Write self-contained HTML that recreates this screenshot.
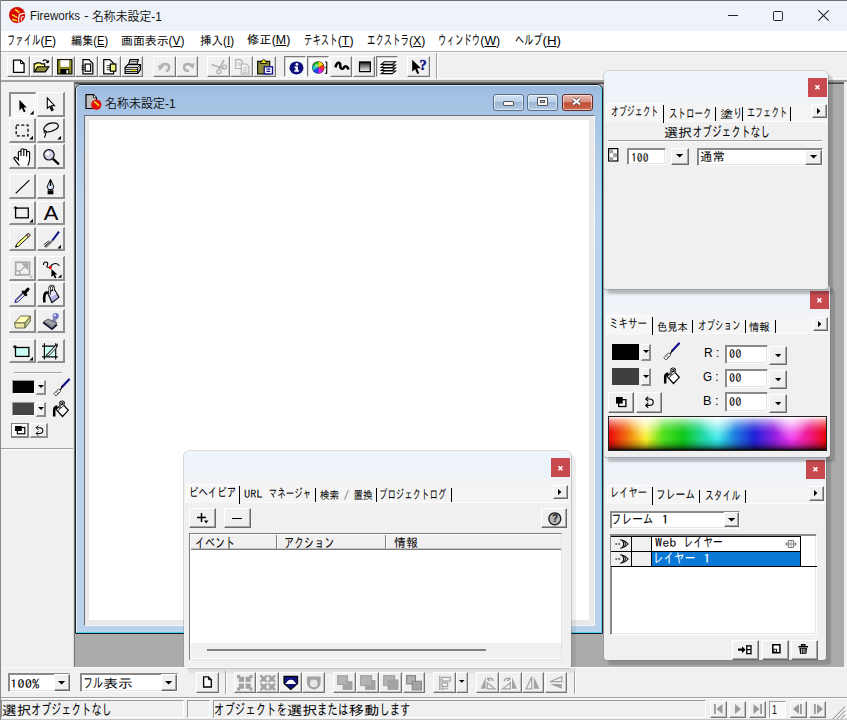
<!DOCTYPE html>
<html lang="ja">
<head>
<meta charset="utf-8">
<title>Fireworks - 名称未設定-1</title>
<style>
*{box-sizing:border-box;margin:0;padding:0}
html,body{width:847px;height:720px;overflow:hidden;background:#f0f0f0}
body{position:relative;font-family:"Liberation Sans","IPAGothic","Noto Sans CJK JP",sans-serif;font-size:12px;color:#000;line-height:1}
.a{position:absolute}
.t{position:absolute;white-space:nowrap;transform-origin:0 0;line-height:1}
.j{font-family:"Liberation Sans","IPAGothic","Noto Sans CJK JP",sans-serif}
u{text-decoration:underline;text-underline-offset:1px}
/* raised classic button */
.rb{position:absolute;background:#f0f0f0;border-top:1px solid #fff;border-left:1px solid #fff;border-right:1px solid #7a7a7a;border-bottom:1px solid #7a7a7a}
.sb{position:absolute;background:#f6f6f6;border-top:1px solid #808080;border-left:1px solid #808080;border-right:1px solid #fff;border-bottom:1px solid #fff}
.sunk{position:absolute;background:#fff;border-top:1px solid #7a7a7a;border-left:1px solid #7a7a7a;border-right:1px solid #e8e8e8;border-bottom:1px solid #e8e8e8}
svg{position:absolute;overflow:visible}
</style>
</head>
<body>
<!-- ===== main window frame ===== -->
<div class="a" id="titlebar" style="left:0;top:0;width:847px;height:31px;background:#eef3fa"></div>
<div class="a" id="menubar" style="left:0;top:31px;width:847px;height:20px;background:#fff"></div>
<div class="a" id="tbarea" style="left:0;top:51px;width:847px;height:32px;background:#f0f0f0"></div>
<div class="a" id="mdi" style="left:74px;top:82px;width:770px;height:585px;background:#ababab"></div>
<div class="a" id="toolbox" style="left:0;top:82px;width:73px;height:585px;background:#f0f0f0"></div>
<div class="a" id="bottombar" style="left:0;top:667px;width:847px;height:31px;background:#f0f0f0"></div>
<div class="a" id="statusbar" style="left:0;top:698px;width:847px;height:22px;background:#f0f0f0"></div>
<svg style="left:8.9px;top:6.8px" width="16.2" height="16.2" viewBox="0 0 16 16"><circle cx="8" cy="8" r="8" fill="#d60a00"/>
<path d="M6 2.3 L10.2 5.7 M3.1 7.5 L8 10.6 M3.2 12.2 L8 13.7" stroke="#ffe020" stroke-width="1.5" fill="none"/>
<path d="M7.4 3 L10.4 4.6 M5 9.4 L8.4 9.8" stroke="#ff9a20" stroke-width=".8" fill="none"/>
<path d="M9.6 8.2 C11.5 6.6 13.5 6.2 15.6 6.4" stroke="#f4f4f0" stroke-width="1.3" fill="none"/>
<path d="M10.4 8 C9 10.5 9.2 13 9.8 15.4" stroke="#f0f4f4" stroke-width="1.3" fill="none"/>
<path d="M14.6 9.6 C12 9 11.2 12.2 12.8 13.4" stroke="#f0f0ec" stroke-width="1.1" fill="none"/></svg><span class="t" id="t0" style="left:29.64px;top:9.85px;transform:scaleX(0.9624);font-size:12px;color:#1a1a1a;font-family:'Liberation Sans','Noto Sans CJK JP',sans-serif;">Fireworks </span><span class="t" id="t1" style="left:83.60px;top:9.75px;transform:scaleX(1.2000);font-size:12px;color:#1a1a1a;font-family:'Liberation Sans','Noto Sans CJK JP',sans-serif;">- </span><span class="t" id="t2" style="left:92.31px;top:10.75px;transform:scaleX(0.9871);font-size:12px;color:#0c0c0c;font-family:'Liberation Sans','Noto Sans CJK JP',sans-serif;font-weight:350;">名称未設定-1</span><div class="a" style="left:728px;top:15px;width:10px;height:1px;background:#222"></div><div class="a" style="left:772.5px;top:10.5px;width:10px;height:10px;border:1px solid #222;border-radius:1.5px"></div><svg style="left:818px;top:10px" width="11" height="11" viewBox="0 0 11 11"><path d="M0.3 0.3 L10.7 10.7 M10.7 0.3 L0.3 10.7" stroke="#222" stroke-width="1.1"/></svg>
<span class="t" id="t3" style="left:6.73px;top:32.80px;transform:scaleX(1.0162);font-size:12px;"><span style="display:inline-block;width:32.88px;height:12px;vertical-align:baseline"><span style="display:inline-block;font-size:14.04px;transform:scaleX(0.585);transform-origin:0 100%;white-space:nowrap">ファイル</span></span>(<u>F</u>)</span><span class="t" id="t4" style="left:70.54px;top:34.55px;transform:scaleX(0.9290);font-size:12px;">編集(<u>E</u>)</span><span class="t" id="t5" style="left:121.26px;top:34.55px;transform:scaleX(0.9920);font-size:12px;">画面表示(<u>V</u>)</span><span class="t" id="t6" style="left:199.52px;top:34.80px;transform:scaleX(0.9635);font-size:12px;">挿入(<u>I</u>)</span><span class="t" id="t7" style="left:247.48px;top:34.30px;transform:scaleX(1.0307);font-size:12px;">修正(<u>M</u>)</span><span class="t" id="t8" style="left:304.23px;top:33.30px;transform:scaleX(1.0267);font-size:12px;"><span style="display:inline-block;width:32.88px;height:12px;vertical-align:baseline"><span style="display:inline-block;font-size:14.04px;transform:scaleX(0.585);transform-origin:0 100%;white-space:nowrap">テキスト</span></span>(<u>T</u>)</span><span class="t" id="t9" style="left:367.23px;top:33.30px;transform:scaleX(1.0224);font-size:12px;"><span style="display:inline-block;width:41.10px;height:12px;vertical-align:baseline"><span style="display:inline-block;font-size:14.04px;transform:scaleX(0.585);transform-origin:0 100%;white-space:nowrap">エクストラ</span></span>(<u>X</u>)</span><span class="t" id="t10" style="left:438.45px;top:32.55px;transform:scaleX(1.0300);font-size:12px;"><span style="display:inline-block;width:41.10px;height:12px;vertical-align:baseline"><span style="display:inline-block;font-size:14.04px;transform:scaleX(0.585);transform-origin:0 100%;white-space:nowrap">ウィンドウ</span></span>(<u>W</u>)</span><span class="t" id="t11" style="left:514.94px;top:32.80px;transform:scaleX(1.1125);font-size:12px;"><span style="display:inline-block;width:24.66px;height:12px;vertical-align:baseline"><span style="display:inline-block;font-size:14.04px;transform:scaleX(0.585);transform-origin:0 100%;white-space:nowrap">ヘルプ</span></span>(<u>H</u>)</span>
<div class="a" style="left:0px;top:51px;width:847px;height:1px;background:#b4b4b4"></div><div class="a" style="left:0px;top:52px;width:847px;height:1px;background:#fbfbfb"></div><div class="a" style="left:0px;top:78.4px;width:847px;height:1px;background:#fbfbfb"></div><div class="a" style="left:0px;top:80.4px;width:847px;height:1.4px;background:#a2a2a2"></div><div class="a" style="left:7px;top:56px;width:23px;height:21px;background:#f0f0f0;border-top:1px solid #fff;border-left:1px solid #fff;border-right:1px solid #787878;border-bottom:1px solid #787878;box-shadow:inset -1px -1px 0 #cfcfcf"></div><svg style="left:9.6px;top:58px" width="17.6" height="17.6" viewBox="0 0 16 16"><path d="M3.2 1.9 H9.6 L12.8 5.1 V13 H3.2 Z" fill="#fff" stroke="#000" stroke-width="1.15"/><path d="M9.6 1.9 V5.1 H12.8" fill="none" stroke="#000" stroke-width=".9"/></svg><div class="a" style="left:30px;top:56px;width:23px;height:21px;background:#f0f0f0;border-top:1px solid #fff;border-left:1px solid #fff;border-right:1px solid #787878;border-bottom:1px solid #787878;box-shadow:inset -1px -1px 0 #cfcfcf"></div><svg style="left:32.6px;top:58px" width="17.6" height="17.6" viewBox="0 0 16 16"><path d="M1 12.6 V5.4 H2.4 L3.3 4.5 H6.6 L7.5 5.4 H10.6 V8" fill="#ffff80" stroke="#000" stroke-width="1.05"/><path d="M1 12.6 L4.2 8 H14.4 L11.2 12.6 Z" fill="#8c8c3c" stroke="#000" stroke-width="1.05"/><path d="M9 2.8 C10.4 1.2 12.8 1.4 13.6 3.8 M13.8 4.2 L11.9 3.7 M13.8 4.2 L14.3 2.2" fill="none" stroke="#000" stroke-width="1.05"/></svg><div class="a" style="left:53px;top:56px;width:22px;height:21px;background:#f0f0f0;border-top:1px solid #fff;border-left:1px solid #fff;border-right:1px solid #787878;border-bottom:1px solid #787878;box-shadow:inset -1px -1px 0 #cfcfcf"></div><svg style="left:55.6px;top:58px" width="17.6" height="17.6" viewBox="0 0 16 16"><rect x="1.5" y="1.5" width="13" height="13" fill="#8c8c1e" stroke="#000"/><rect x="4" y="2" width="8" height="6" fill="#fff"/><rect x="4" y="10" width="8" height="4.5" fill="#000"/><rect x="9.5" y="11" width="1.6" height="3" fill="#fff"/></svg><div class="a" style="left:75px;top:56px;width:23px;height:21px;background:#f0f0f0;border-top:1px solid #fff;border-left:1px solid #fff;border-right:1px solid #787878;border-bottom:1px solid #787878;box-shadow:inset -1px -1px 0 #cfcfcf"></div><svg style="left:77.6px;top:58px" width="17.6" height="17.6" viewBox="0 0 16 16"><path d="M4.5 1.5 H10 L13.5 5 V14.5 H4.5 Z" fill="#fff" stroke="#000" stroke-width="1.1"/><rect x="6.5" y="5.5" width="5" height="6.5" fill="#fff" stroke="#000" stroke-width="1.1"/><path d="M3.2 7 H6 M3.2 8.8 H6 M3.2 10.6 H6" stroke="#000" stroke-width=".7"/></svg><div class="a" style="left:98px;top:56px;width:23px;height:21px;background:#f0f0f0;border-top:1px solid #fff;border-left:1px solid #fff;border-right:1px solid #787878;border-bottom:1px solid #787878;box-shadow:inset -1px -1px 0 #cfcfcf"></div><svg style="left:100.6px;top:58px" width="17.6" height="17.6" viewBox="0 0 16 16"><path d="M2.5 1.5 H8 L11.5 5 V14.5 H2.5 Z" fill="#fff" stroke="#000" stroke-width="1.1"/><rect x="8.5" y="5.5" width="5" height="6.5" fill="#f4f480" stroke="#000" stroke-width="1.1"/><path d="M5.2 7 H8.5 M5.2 8.8 H8.5 M5.2 10.6 H8.5" stroke="#000" stroke-width=".7"/></svg><div class="a" style="left:121px;top:56px;width:22px;height:21px;background:#f0f0f0;border-top:1px solid #fff;border-left:1px solid #fff;border-right:1px solid #787878;border-bottom:1px solid #787878;box-shadow:inset -1px -1px 0 #cfcfcf"></div><svg style="left:123.6px;top:58px" width="17.6" height="17.6" viewBox="0 0 16 16"><path d="M4 6.5 L5.5 1.5 H13 L11.5 6.5" fill="#fff" stroke="#000" stroke-width="1.1"/><path d="M5.8 3.2 H11.8 M5.3 4.8 H11.3" stroke="#000" stroke-width=".6"/><path d="M1 8.5 L3.5 6 H15 V10.5 L12.5 14 H1 Z" fill="#fff" stroke="#000" stroke-width="1.1"/><path d="M1 8.5 H12.5 V14 M12.5 8.5 L15 6 M1.2 10.3 H12.3 M1.2 12.2 H12.3" fill="none" stroke="#000" stroke-width=".9"/><rect x="6.5" y="10.6" width="4.6" height="1.3" fill="#e8d800"/><path d="M13.3 9.6 L14.6 8.2 M13.3 11.6 L14.6 10.2" stroke="#000" stroke-width=".6"/></svg><div class="a" style="left:153px;top:56px;width:23px;height:21px;background:#f0f0f0;border-top:1px solid #fff;border-left:1px solid #fff;border-right:1px solid #787878;border-bottom:1px solid #787878;box-shadow:inset -1px -1px 0 #cfcfcf"></div><svg style="left:155.6px;top:58px" width="17.6" height="17.6" viewBox="0 0 16 16"><path d="M4.5 8.5 C5 4.5 12 4.5 12 8.5 C12 10.5 10.8 11.6 9 12" fill="none" stroke="#b2b2b2" stroke-width="2.3"/><path d="M1.6 6.6 L7.4 7.4 L3.2 11.6 Z" fill="#b2b2b2"/></svg><div class="a" style="left:176px;top:56px;width:22px;height:21px;background:#f0f0f0;border-top:1px solid #fff;border-left:1px solid #fff;border-right:1px solid #787878;border-bottom:1px solid #787878;box-shadow:inset -1px -1px 0 #cfcfcf"></div><svg style="left:178.6px;top:58px" width="17.6" height="17.6" viewBox="0 0 16 16"><path d="M11.5 7.5 C11 4.5 4.5 4.8 4.5 8.5 C4.5 10.8 6.5 12 9 11.6" fill="none" stroke="#b2b2b2" stroke-width="2.3"/><path d="M14.4 4.6 L8.6 6.2 L12.8 10 Z" fill="#b2b2b2"/></svg><div class="a" style="left:207px;top:56px;width:23px;height:21px;background:#f0f0f0;border-top:1px solid #fff;border-left:1px solid #fff;border-right:1px solid #787878;border-bottom:1px solid #787878;box-shadow:inset -1px -1px 0 #cfcfcf"></div><svg style="left:209.6px;top:58px" width="17.6" height="17.6" viewBox="0 0 16 16"><path d="M1.5 6 L12 9.8 M12.8 1.8 L7.6 11" stroke="#b0b0b0" stroke-width="1.4" fill="none"/><circle cx="8" cy="12.6" r="1.8" fill="none" stroke="#b0b0b0" stroke-width="1.2"/><circle cx="13.2" cy="8.2" r="1.8" fill="none" stroke="#b0b0b0" stroke-width="1.2"/></svg><div class="a" style="left:230px;top:56px;width:23px;height:21px;background:#f0f0f0;border-top:1px solid #fff;border-left:1px solid #fff;border-right:1px solid #787878;border-bottom:1px solid #787878;box-shadow:inset -1px -1px 0 #cfcfcf"></div><svg style="left:232.6px;top:58px" width="17.6" height="17.6" viewBox="0 0 16 16"><path d="M2.5 1.5 H6.5 L8.5 3.5 V9.5 H2.5 Z" fill="#f6f6f6" stroke="#b0b0b0"/><path d="M7.5 5.5 H12 L14.5 8 V14.5 H7.5 Z" fill="#f6f6f6" stroke="#b0b0b0"/><path d="M4 4.5 H7 M4 6.5 H7 M9 9 H13 M9 11 H13 M9 13 H13" stroke="#b0b0b0" stroke-width=".8"/></svg><div class="a" style="left:253px;top:56px;width:23px;height:21px;background:#f0f0f0;border-top:1px solid #fff;border-left:1px solid #fff;border-right:1px solid #787878;border-bottom:1px solid #787878;box-shadow:inset -1px -1px 0 #cfcfcf"></div><svg style="left:255.6px;top:58px" width="17.6" height="17.6" viewBox="0 0 16 16"><rect x="1.5" y="3" width="11" height="11.5" fill="#8c8c3c" stroke="#000"/><path d="M4 5 V3.2 H5.5 C5.5 0.8 8.5 0.8 8.5 3.2 H10 V5 Z" fill="#f0e000" stroke="#000" stroke-width=".8"/><rect x="7.5" y="8" width="7.5" height="6.5" fill="#fff" stroke="#10108c" stroke-width="1.2"/><path d="M9.5 10.2 H13 M9.5 12.2 H13" stroke="#10108c" stroke-width="1.1"/></svg><div class="a" style="left:284px;top:56px;width:22px;height:21px;background:#f9f9f9;border-top:1px solid #7c7c7c;border-left:1px solid #7c7c7c;border-right:1px solid #fff;border-bottom:1px solid #fff;box-shadow:inset 1px 1px 0 #d4d4d4"></div><svg style="left:286.6px;top:58px" width="17.6" height="17.6" viewBox="0 0 16 16"><ellipse cx="8.6" cy="9" rx="6.4" ry="5.9" fill="#10107c"/><circle cx="9" cy="5.9" r="1.25" fill="#fff"/><path d="M6.8 7.8 H9.9 V11.2 H10.9 V12.4 H6.6 V11.2 H7.7 V9 H6.8 Z" fill="#fff"/></svg><div class="a" style="left:307px;top:56px;width:22px;height:21px;background:#f9f9f9;border-top:1px solid #7c7c7c;border-left:1px solid #7c7c7c;border-right:1px solid #fff;border-bottom:1px solid #fff;box-shadow:inset 1px 1px 0 #d4d4d4"></div><svg style="left:309.6px;top:58px" width="17.6" height="17.6" viewBox="0 0 16 16"><g transform="translate(1.2 1) scale(.9)"><circle cx="7" cy="8.5" r="6.3" fill="#222"/><path d="M7 8.5 L7 2.8 A5.7 5.7 0 0 1 12 5.6 Z" fill="#ffe000"/><path d="M7 8.5 L12 5.6 A5.7 5.7 0 0 1 12 11.4 Z" fill="#ff3020"/><path d="M7 8.5 L12 11.4 A5.7 5.7 0 0 1 7 14.2 Z" fill="#e020e0"/><path d="M7 8.5 L7 14.2 A5.7 5.7 0 0 1 2 11.4 Z" fill="#2040ff"/><path d="M7 8.5 L2 11.4 A5.7 5.7 0 0 1 2 5.6 Z" fill="#20c8c8"/><path d="M7 8.5 L2 5.6 A5.7 5.7 0 0 1 7 2.8 Z" fill="#20c020"/><circle cx="5.5" cy="6.5" r="1.6" fill="#fff" opacity=".55"/><path d="M15.6 3 V14.4 M14 3 H15.6 M14 14.4 H15.6 M14.2 8.7 H15.6" stroke="#000" stroke-width="1.1" fill="none"/></g></svg><div class="a" style="left:330px;top:56px;width:22px;height:21px;background:#f0f0f0;border-top:1px solid #fff;border-left:1px solid #fff;border-right:1px solid #787878;border-bottom:1px solid #787878;box-shadow:inset -1px -1px 0 #cfcfcf"></div><svg style="left:332.6px;top:58px" width="17.6" height="17.6" viewBox="0 0 16 16"><path d="M2.2 8.5 C3.5 3.2 6.8 3.4 6.6 6.6 C6.4 10 9 10.6 10 8.6 C11 6.8 13 7.4 14.2 10.4" fill="none" stroke="#000" stroke-width="2.3"/></svg><div class="a" style="left:353px;top:56px;width:22px;height:21px;background:#f0f0f0;border-top:1px solid #fff;border-left:1px solid #fff;border-right:1px solid #787878;border-bottom:1px solid #787878;box-shadow:inset -1px -1px 0 #cfcfcf"></div><svg style="left:355.6px;top:58px" width="17.6" height="17.6" viewBox="0 0 16 16"><defs><linearGradient id="gfill" x1="0" y1="0" x2="0" y2="1"><stop offset="0" stop-color="#000"/><stop offset=".25" stop-color="#555"/><stop offset="1" stop-color="#fff"/></linearGradient></defs><rect x="3.2" y="3.6" width="9.8" height="8.8" fill="url(#gfill)" stroke="#000" stroke-width="1.1"/></svg><div class="a" style="left:376px;top:56px;width:22px;height:21px;background:#f9f9f9;border-top:1px solid #7c7c7c;border-left:1px solid #7c7c7c;border-right:1px solid #fff;border-bottom:1px solid #fff;box-shadow:inset 1px 1px 0 #d4d4d4"></div><svg style="left:378.6px;top:58px" width="17.6" height="17.6" viewBox="0 0 16 16"><path d="M5 3.5 H15 L12 5.8 H2 Z M5 6.3 H15 L12 8.6 H2 Z M5 9.1 H15 L12 11.4 H2 Z M5 11.9 H15 L12 14.2 H2 Z" fill="#fdfdfd" stroke="#000" stroke-width=".95"/></svg><div class="a" style="left:407px;top:56px;width:23px;height:21px;background:#f0f0f0;border-top:1px solid #fff;border-left:1px solid #fff;border-right:1px solid #787878;border-bottom:1px solid #787878;box-shadow:inset -1px -1px 0 #cfcfcf"></div><svg style="left:409.6px;top:58px" width="17.6" height="17.6" viewBox="0 0 16 16"><path d="M2 1.5 V12.5 L4.6 10 L6.6 14.6 L8.4 13.8 L6.4 9.4 H10 Z" fill="#000"/><text x="8.6" y="10.6" font-family="Liberation Serif,serif" font-weight="bold" font-size="13" fill="#10108c" stroke="#10108c" stroke-width=".4">?</text></svg><div class="a" style="left:436px;top:53px;width:1px;height:26px;background:#a0a0a0"></div><div class="a" style="left:437px;top:53px;width:1px;height:26px;background:#fff"></div>
<div class="a" style="left:73px;top:82px;width:1px;height:585px;background:#dcdcdc"></div><div class="a" style="left:9.4px;top:92.3px;width:26.7px;height:24.8px;background:#f6f6f6;border-top:2px solid #8c8c8c;border-left:2px solid #8c8c8c;border-right:1px solid #fff;border-bottom:1px solid #fff"></div><svg style="left:10.4px;top:94.3px" width="24" height="24" viewBox="0 0 24 24"><path d="M9.4 5.7 V16.4 L11.9 14.1 L13.8 18.3 L15.6 17.5 L13.7 13.4 H16.8 Z" fill="#000"/><path d="M23.7 16.6 V20.4 H19.9 Z" fill="#000"/></svg><div class="a" style="left:37px;top:92.3px;width:27.5px;height:24.8px;background:#f0f0f0;border-top:1px solid #fff;border-left:1px solid #fff;border-right:2px solid #8e8e8e;border-bottom:2px solid #8e8e8e"></div><svg style="left:38px;top:94.3px" width="24" height="24" viewBox="0 0 24 24"><path d="M9.3 3.9 V14.4 L11.7 12.3 L13.6 16.7 L15.2 16 L13.3 11.7 H16.5 Z" fill="#fff" stroke="#000" stroke-width="1.1"/><path d="M12 12.6 L13.8 16.6 L15 16 L13.2 12 Z" fill="#000"/></svg><div class="a" style="left:9.4px;top:118.4px;width:26.7px;height:24.8px;background:#f0f0f0;border-top:1px solid #fff;border-left:1px solid #fff;border-right:2px solid #8e8e8e;border-bottom:2px solid #8e8e8e"></div><svg style="left:10.4px;top:120.4px" width="24" height="24" viewBox="0 0 24 24"><rect x="6.2" y="5.2" width="11.8" height="10.6" fill="none" stroke="#000" stroke-width="1.3" stroke-dasharray="3 2.1"/><path d="M23 15.7 V19.4 H19.3 Z" fill="#000"/></svg><div class="a" style="left:37px;top:118.4px;width:27.5px;height:24.8px;background:#f0f0f0;border-top:1px solid #fff;border-left:1px solid #fff;border-right:2px solid #8e8e8e;border-bottom:2px solid #8e8e8e"></div><svg style="left:38px;top:120.4px" width="24" height="24" viewBox="0 0 24 24"><path d="M7 11.6 C3.5 8 9 2.6 15.5 2.9 C21 3.2 22 7 17.5 9.4 C13.5 11.4 9 12.6 7 11.6 Z" fill="none" stroke="#000" stroke-width="1.15"/><circle cx="7.3" cy="12" r="1.3" fill="none" stroke="#000" stroke-width=".9"/><path d="M7.6 13 C8.2 14.6 7 16 6.4 17.6" fill="none" stroke="#000" stroke-width="1.1"/><path d="M23 15.7 V19.4 H19.3 Z" fill="#000"/></svg><div class="a" style="left:9.4px;top:144.2px;width:26.7px;height:24.8px;background:#f0f0f0;border-top:1px solid #fff;border-left:1px solid #fff;border-right:2px solid #8e8e8e;border-bottom:2px solid #8e8e8e"></div><svg style="left:10.4px;top:146.2px" width="24" height="24" viewBox="0 0 24 24"><path d="M9.4 19.6 L4.4 13.2 C3.2 11.4 5 10.4 6.4 11.8 L8.4 13.8 V6.5 C8.4 4.8 11 4.8 11 6.5 V10 V4 C11 2.3 13.8 2.3 13.8 4 V10 V4.4 C13.8 2.8 16.6 2.8 16.6 4.4 V10.5 V6.6 C16.6 5 19.6 5 19.6 6.6 V13 C19.6 16 18.4 17.6 17.8 19.6" fill="#fff" stroke="#000" stroke-width="1.15"/></svg><div class="a" style="left:37px;top:144.2px;width:27.5px;height:24.8px;background:#f0f0f0;border-top:1px solid #fff;border-left:1px solid #fff;border-right:2px solid #8e8e8e;border-bottom:2px solid #8e8e8e"></div><svg style="left:38px;top:146.2px" width="24" height="24" viewBox="0 0 24 24"><circle cx="11" cy="8.8" r="5.1" fill="#d4d4de" stroke="#000" stroke-width="1.4"/><circle cx="11" cy="8.8" r="4.2" fill="none" stroke="#b8b8f0" stroke-width=".8"/><circle cx="9.6" cy="7.2" r="1.9" fill="#fff"/><path d="M15 12.8 L21 18.4" stroke="#000" stroke-width="2.3"/></svg><div class="a" style="left:9.4px;top:174.3px;width:26.7px;height:24.8px;background:#f0f0f0;border-top:1px solid #fff;border-left:1px solid #fff;border-right:2px solid #8e8e8e;border-bottom:2px solid #8e8e8e"></div><svg style="left:10.4px;top:176.3px" width="24" height="24" viewBox="0 0 24 24"><path d="M5.7 17.4 L19.4 4.1" stroke="#000" stroke-width="1.15"/></svg><div class="a" style="left:37px;top:174.3px;width:27.5px;height:24.8px;background:#f0f0f0;border-top:1px solid #fff;border-left:1px solid #fff;border-right:2px solid #8e8e8e;border-bottom:2px solid #8e8e8e"></div><svg style="left:38px;top:176.3px" width="24" height="24" viewBox="0 0 24 24"><path d="M12.5 3.3 L9.2 10.6 L10.4 13.6 H14.6 L15.8 10.6 Z" fill="#c8d8f4" stroke="#000" stroke-width="1"/><path d="M12.5 3.5 V10.5" stroke="#000" stroke-width="1.2"/><circle cx="12.5" cy="11" r=".9" fill="#fff"/><rect x="9.6" y="14.3" width="5.8" height="4" fill="#000"/></svg><div class="a" style="left:9.4px;top:200.6px;width:26.7px;height:24.8px;background:#f0f0f0;border-top:1px solid #fff;border-left:1px solid #fff;border-right:2px solid #8e8e8e;border-bottom:2px solid #8e8e8e"></div><svg style="left:10.4px;top:202.6px" width="24" height="24" viewBox="0 0 24 24"><rect x="5.6" y="5.1" width="12.7" height="9.7" fill="none" stroke="#000" stroke-width="1.3"/><path d="M5.6 3.2 V6.6 M3.8 4.9 H7.2" stroke="#000" stroke-width="1.1"/><path d="M23 15.7 V19.4 H19.3 Z" fill="#000"/></svg><div class="a" style="left:37px;top:200.6px;width:27.5px;height:24.8px;background:#f0f0f0;border-top:1px solid #fff;border-left:1px solid #fff;border-right:2px solid #8e8e8e;border-bottom:2px solid #8e8e8e"></div><svg style="left:38px;top:202.6px" width="24" height="24" viewBox="0 0 24 24"><text x="5.75" y="16.9" font-family="Liberation Sans,sans-serif" font-size="19.6" textLength="14.6" lengthAdjust="spacingAndGlyphs" fill="#000">A</text></svg><div class="a" style="left:9.4px;top:226.5px;width:26.7px;height:24.8px;background:#f0f0f0;border-top:1px solid #fff;border-left:1px solid #fff;border-right:2px solid #8e8e8e;border-bottom:2px solid #8e8e8e"></div><svg style="left:10.4px;top:228.5px" width="24" height="24" viewBox="0 0 24 24"><path d="M5.5 18.2 L6.6 15 L17.8 4.8 C18.6 4 20.6 5.8 19.6 6.8 L8.6 17.2 Z" fill="#ffffa0" stroke="#000" stroke-width=".9"/><path d="M16.6 6 L18.4 7.9" stroke="#000" stroke-width=".8"/><path d="M17.8 4.8 C18.6 4 20.6 5.8 19.6 6.8 L18.4 7.9 L16.6 6 Z" fill="#f8c0c0" stroke="#000" stroke-width=".7"/><path d="M5.5 18.2 L6.2 16.2 L7.5 17.5 Z" fill="#000"/><path d="M7.4 15.6 L17 6.9" stroke="#e0e040" stroke-width=".7"/></svg><div class="a" style="left:37px;top:226.5px;width:27.5px;height:24.8px;background:#f0f0f0;border-top:1px solid #fff;border-left:1px solid #fff;border-right:2px solid #8e8e8e;border-bottom:2px solid #8e8e8e"></div><svg style="left:38px;top:228.5px" width="24" height="24" viewBox="0 0 24 24"><path d="M21 2.6 L14 12" stroke="#10108c" stroke-width="2"/><path d="M14.4 11.4 L11.6 14.2" stroke="#909090" stroke-width="2.6"/><path d="M11.8 12.6 L6.4 17.4 M12.8 13.8 L8 18.6 M10.8 11.8 L5.6 15.8 M12.2 13.2 L7 18" stroke="#404040" stroke-width="1"/><path d="M23 15.7 V19.4 H19.3 Z" fill="#000"/></svg><div class="a" style="left:9.4px;top:255.8px;width:26.7px;height:24.8px;background:#f0f0f0;border-top:1px solid #fff;border-left:1px solid #fff;border-right:2px solid #8e8e8e;border-bottom:2px solid #8e8e8e"></div><svg style="left:10.4px;top:257.8px" width="24" height="24" viewBox="0 0 24 24"><rect x="5.7" y="4.3" width="13.8" height="12.5" fill="none" stroke="#aaa" stroke-width="1.8"/><rect x="5.6" y="12.9" width="4.2" height="4" fill="#f8f8f8" stroke="#aaa" stroke-width="1.5"/><path d="M10.6 12.6 L16 7.2 M12.6 6 H17.4 V10.8 Z" fill="#aaa" stroke="#aaa" stroke-width="1.3"/><path d="M22.4 16.8 V19.7 H19.5 Z" fill="#aaa"/></svg><div class="a" style="left:37px;top:255.8px;width:27.5px;height:24.8px;background:#f0f0f0;border-top:1px solid #fff;border-left:1px solid #fff;border-right:2px solid #8e8e8e;border-bottom:2px solid #8e8e8e"></div><svg style="left:38px;top:257.8px" width="24" height="24" viewBox="0 0 24 24"><path d="M5.4 7 C5.4 2.8 10.6 3.2 9.6 6.6 C8.8 9 7.6 9.4 12.2 9.5 C13 6.2 18.6 3.4 21.4 7.8" fill="none" stroke="#000" stroke-width="1.15"/><rect x="11" y="8.2" width="2.7" height="2.7" fill="#f00000"/><path d="M13.4 11 V19 L15.4 17.2 L17 20.4 L18.4 19.7 L16.9 16.6 H19.4 Z" fill="#000"/><path d="M23.5 16.2 V19.8 H19.9 Z" fill="#000"/></svg><div class="a" style="left:9.4px;top:282.1px;width:26.7px;height:24.8px;background:#f0f0f0;border-top:1px solid #fff;border-left:1px solid #fff;border-right:2px solid #8e8e8e;border-bottom:2px solid #8e8e8e"></div><svg style="left:10.4px;top:284.1px" width="24" height="24" viewBox="0 0 24 24"><path d="M4.9 18.4 L5.8 15.6 L13.6 7.8 L15.8 10 L8 17.8 Z" fill="#f8f8ff" stroke="#10108c" stroke-width="1"/><path d="M6.4 16.2 L13.8 8.8" stroke="#000" stroke-width=".9"/><path d="M12.2 7 L16.8 11.6" stroke="#000" stroke-width="2.4"/><path d="M14.6 9 L18 5.2" stroke="#000" stroke-width="3.2" stroke-linecap="round"/></svg><div class="a" style="left:37px;top:282.1px;width:27.5px;height:24.8px;background:#f0f0f0;border-top:1px solid #fff;border-left:1px solid #fff;border-right:2px solid #8e8e8e;border-bottom:2px solid #8e8e8e"></div><svg style="left:38px;top:284.1px" width="24" height="24" viewBox="0 0 24 24"><path d="M9.4 8.6 L16.2 5.2 L21 13.2 L14 18.6 Z" fill="#b8b8e8" stroke="#000" stroke-width="1.1"/><path d="M11 9.4 L16.4 6.6 L18.4 10 L12.6 13 Z" fill="#e8e8fc"/><path d="M9.6 8.4 C6.4 8.6 5.6 12 6.4 18.4" fill="none" stroke="#000" stroke-width="2.6"/><path d="M11.6 10 V3.6 C11.6 1.4 15.6 1.4 15.6 3.6 V7" fill="none" stroke="#000" stroke-width="2.2"/><path d="M11.6 10 V3.6 C11.6 1.4 15.6 1.4 15.6 3.6 V7" fill="none" stroke="#fff" stroke-width=".9"/><circle cx="11.6" cy="10.4" r="1" fill="#fff" stroke="#000" stroke-width=".5"/></svg><div class="a" style="left:9.4px;top:308.5px;width:26.7px;height:24.8px;background:#f0f0f0;border-top:1px solid #fff;border-left:1px solid #fff;border-right:2px solid #8e8e8e;border-bottom:2px solid #8e8e8e"></div><svg style="left:10.4px;top:310.5px" width="24" height="24" viewBox="0 0 24 24"><path d="M4.6 12 L10.6 5 H20.4 L15 12 Z" fill="#ffffb8" stroke="#606040" stroke-width=".9"/><path d="M4.6 12 H15 V17 H5.4 Z" fill="#ece6a8" stroke="#606040" stroke-width=".9"/><path d="M15 12 L20.4 5 V10 L15 17 Z" fill="#b8c890" stroke="#606040" stroke-width=".9"/></svg><div class="a" style="left:37px;top:308.5px;width:27.5px;height:24.8px;background:#f0f0f0;border-top:1px solid #fff;border-left:1px solid #fff;border-right:2px solid #8e8e8e;border-bottom:2px solid #8e8e8e"></div><svg style="left:38px;top:310.5px" width="24" height="24" viewBox="0 0 24 24"><circle cx="17.7" cy="5.1" r="3.1" fill="#7070c0"/><circle cx="16.8" cy="4.2" r="1.2" fill="#d8d8ff"/><path d="M15.2 7 L12.4 11.4 L17.4 13 L18.6 8 Z" fill="#8890b0"/><path d="M5.6 10.6 L10 8 L19.2 12 L14.4 16 Z" fill="#a0a0a8" stroke="#383850" stroke-width=".7"/><path d="M5.2 11.6 L14 18 L19 13.6" fill="none" stroke="#181830" stroke-width="1.8"/></svg><div class="a" style="left:9.4px;top:338.5px;width:26.7px;height:24.8px;background:#f0f0f0;border-top:1px solid #fff;border-left:1px solid #fff;border-right:2px solid #8e8e8e;border-bottom:2px solid #8e8e8e"></div><svg style="left:10.4px;top:340.5px" width="24" height="24" viewBox="0 0 24 24"><rect x="5.5" y="6.5" width="13.4" height="8.9" fill="#ccfff6" stroke="#000" stroke-width="1.3"/><path d="M4.9 4 V7.6 M3 5.9 H6.8" stroke="#000" stroke-width="1.1"/><path d="M23 15.7 V19.4 H19.3 Z" fill="#000"/></svg><div class="a" style="left:37px;top:338.5px;width:27.5px;height:24.8px;background:#f0f0f0;border-top:1px solid #fff;border-left:1px solid #fff;border-right:2px solid #8e8e8e;border-bottom:2px solid #8e8e8e"></div><svg style="left:38px;top:340.5px" width="24" height="24" viewBox="0 0 24 24"><rect x="6.4" y="5.1" width="11.3" height="10.8" fill="#ccfff6"/><path d="M4 5.1 H19.8 M4 15.9 H19.8 M6.4 2.2 V18.5 M17.7 2.2 V18.5" stroke="#000" stroke-width="1.15"/><path d="M7.4 15.4 L18.2 4" stroke="#000" stroke-width="1"/><path d="M19.4 2.8 L17.8 7.6 L10.4 15 L9.2 13.6 Z" fill="#fff" stroke="#000" stroke-width=".9"/></svg><div class="a" style="left:14.2px;top:372px;width:48px;height:1px;background:#a4a4a4"></div><div class="a" style="left:14.2px;top:373px;width:48px;height:1px;background:#fbfbfb"></div><div class="a" style="left:12.1px;top:380.1px;width:22.6px;height:14.4px;background:#000;border-top:1px solid #9a9a9a;border-left:1px solid #9a9a9a;border-right:1px solid #fff;border-bottom:1px solid #fff"></div><div class="a" style="left:36px;top:380.1px;width:10px;height:14.6px;background:#f0f0f0;border-top:1px solid #fff;border-left:1px solid #fff;border-right:2px solid #8e8e8e;border-bottom:2px solid #8e8e8e"></div><svg style="left:37.6px;top:384.9px" width="6" height="3" viewBox="0 0 6 3"><path d="M0 0 H6 L3 3 Z" fill="#000"/></svg><svg style="left:52.8px;top:378.8px" width="18" height="17" viewBox="0 0 18 17"><path d="M16 0.5 L9.2 7.7" stroke="#10108c" stroke-width="2.2" stroke-linecap="round"/><path d="M9.4 7.4 L7.2 11" stroke="#000" stroke-width="1.2"/><path d="M5.6 9.8 L7.8 12.2 L3 17 L0.9 14.7 Z" fill="#f4f4f4" stroke="#404040" stroke-width=".9"/><path d="M4.6 12 L2.6 14 M6 13 L4 15" stroke="#505050" stroke-width=".7"/></svg><div class="a" style="left:12.1px;top:402.4px;width:22.6px;height:14px;background:#454545;border-top:1px solid #9a9a9a;border-left:1px solid #9a9a9a;border-right:1px solid #fff;border-bottom:1px solid #fff"></div><div class="a" style="left:36px;top:402.4px;width:10px;height:14.4px;background:#f0f0f0;border-top:1px solid #fff;border-left:1px solid #fff;border-right:2px solid #8e8e8e;border-bottom:2px solid #8e8e8e"></div><svg style="left:37.6px;top:407.1px" width="6" height="3" viewBox="0 0 6 3"><path d="M0 0 H6 L3 3 Z" fill="#000"/></svg><svg style="left:52px;top:401px" width="17" height="17" viewBox="0 0 17 17"><path d="M4 8.3 L10.5 2.8 L16.3 9.3 L10.5 15.5 Z" fill="#fff" stroke="#000" stroke-width="1.2"/><path d="M5.8 9.8 L11.8 4.6" stroke="#000" stroke-width=".8"/><path d="M5.4 5.4 C3 5.6 2.2 7 2.2 9 V15.6" fill="none" stroke="#000" stroke-width="2.5"/><path d="M8 8 V2.6 C8 0 12 0 12 2.6 V4.6" fill="none" stroke="#000" stroke-width="2.1"/><path d="M8 8 V2.6 C8 0 12 0 12 2.6 V4.6" fill="none" stroke="#fff" stroke-width=".8"/></svg><div class="a" style="left:10.9px;top:423.1px;width:18px;height:14.8px;background:#fafafa;border:1px solid #7e7e7e;border-right:2px solid #868686;border-bottom:2px solid #868686;box-shadow:inset 1px 1px 0 #fff"></div><svg style="left:15.2px;top:426.3px" width="10.4" height="8.4" viewBox="0 0 10.4 8.4"><rect x="2.4" y="1.5" width="7.4" height="6.3" fill="#fff" stroke="#000" stroke-width="1.2"/><rect x="0" y="0" width="6.8" height="5" fill="#000"/></svg><div class="a" style="left:30.3px;top:423.1px;width:17.9px;height:14.8px;background:#f0f0f0;border-top:1px solid #fff;border-left:1px solid #fff;border-right:2px solid #8e8e8e;border-bottom:2px solid #8e8e8e"></div><svg style="left:34.6px;top:424.8px" width="9" height="11.2" viewBox="0 0 9 12.4"><path d="M0.8 3 H4.6 C9.4 3 9.4 9.4 4.6 9.4 H0.8" fill="none" stroke="#000" stroke-width="1.15"/><path d="M3.2 0.6 L0.8 3 L3.2 5.4" fill="none" stroke="#000" stroke-width="1.1"/><path d="M3.2 7 L0.8 9.4 L3.2 11.8" fill="none" stroke="#000" stroke-width="1.1"/></svg><div class="a" style="left:0px;top:448px;width:73px;height:1px;background:#a0a0a0"></div><div class="a" style="left:0px;top:449px;width:73px;height:1px;background:#fff"></div>
<div class="a" style="left:74px;top:82px;width:770px;height:2px;background:linear-gradient(#6a6a6a 0,#6a6a6a 50%,#4a4a4a 50%)"></div><div class="a" style="left:74px;top:82px;width:1px;height:585px;background:#767676"></div><div class="a" style="left:75px;top:83.6px;width:528px;height:550.4px;background:linear-gradient(#98b7dc 0,#a4c1e3 10px,#a9c5e5 34px,#b4cdea 80px,#bdd4ed 130px,#b9d1ea 220px,#b9d1ea 100%);border:1px solid #161c24;border-radius:6px 6px 1px 1px"></div><div class="a" style="left:76px;top:84.6px;width:526px;height:548.4px;border:1px solid rgba(255,255,255,.7);border-bottom:1px solid #49d0ee;border-right:1px solid #5fd2f0;border-radius:5px 5px 0 0"></div><svg style="left:85px;top:94px" width="17" height="17" viewBox="0 0 17 17"><path d="M1 0.7 H8.5 L11.5 3.7 V14.5 H1 Z" fill="#c0c0c0" stroke="#000" stroke-width="1.2"/><path d="M8.5 0.7 V3.7 H11.5" fill="#fff" stroke="#000" stroke-width=".8"/><circle cx="11.3" cy="10.6" r="5.2" fill="#e01010"/><path d="M8.5 8 L13.5 12.5 L14.5 11 L10 7 Z" fill="#ffd820"/><path d="M9.2 8.4 L13.4 12" stroke="#e07000" stroke-width=".7"/></svg><span class="t" id="t12" style="left:105.00px;top:97.55px;transform:scaleX(1.0000);font-size:12px;color:#0c0c0c;font-family:'Liberation Sans','Noto Sans CJK JP',sans-serif;font-weight:350;">名称未設定-1</span><div class="a" style="left:493px;top:93.6px;width:31.4px;height:17px;background:linear-gradient(#d5e3f3 0,#bcd0e8 45%,#9bb7d8 50%,#b4cbe4 100%);border:1px solid #5b6e88;border-radius:3px;box-shadow:inset 0 0 0 1px rgba(255,255,255,.55)"></div><div class="a" style="left:527px;top:93.6px;width:31.4px;height:17px;background:linear-gradient(#d5e3f3 0,#bcd0e8 45%,#9bb7d8 50%,#b4cbe4 100%);border:1px solid #5b6e88;border-radius:3px;box-shadow:inset 0 0 0 1px rgba(255,255,255,.55)"></div><div class="a" style="left:561.5px;top:93.6px;width:31.6px;height:17px;background:linear-gradient(#e6b9ae 0,#d68f80 45%,#c04a32 52%,#cb6a52 100%);border:1px solid #6a2a22;border-radius:3px;box-shadow:inset 0 0 0 1px rgba(255,255,255,.55)"></div><div class="a" style="left:503px;top:101.4px;width:11.4px;height:4.6px;background:#f6f6f6;border:1px solid #555;border-radius:1px"></div><div class="a" style="left:537.3px;top:97.2px;width:10.6px;height:8.4px;background:#f6f6f6;border:1px solid #555;border-radius:1px"></div><div class="a" style="left:540.3px;top:100.2px;width:4.6px;height:2.8px;background:#a9c0dc;border:1px solid #555"></div><svg style="left:571.4px;top:96.8px" width="11" height="9" viewBox="0 0 11 9"><path d="M2 1.6 L9 7.4 M9 1.6 L2 7.4" stroke="#5a3a3a" stroke-width="3.8"/><path d="M2 1.6 L9 7.4 M9 1.6 L2 7.4" stroke="#f8f8f8" stroke-width="2.1"/></svg><div class="a" style="left:83.6px;top:114.6px;width:511px;height:511px;background:#e9e9e9;border:1px solid #6c7076;border-right-color:#f4f7fa;border-bottom-color:#f4f7fa"></div><div class="a" style="left:88.6px;top:119.6px;width:500.6px;height:500.6px;background:#fff"></div>
<div class="a" style="left:604.2px;top:452px;width:221.8px;height:208.4px;background:#f0f0f0;border-radius:5px 5px 3px 3px;box-shadow:4.5px 4.5px 1.6px 0 rgba(0,0,0,0.16), 0 0 0 .6px rgba(120,120,120,.5)"></div><div class="a" style="left:604.2px;top:452px;width:221.8px;height:35.19999999999999px;background:linear-gradient(#f0f5fa 0,#edf3f9 55%,#f0f3f7 85%,#f4f4f5 100%);border-radius:5px 5px 0 0"></div><div class="a" style="left:806.4px;top:460px;width:18.6px;height:18.6px;background:#c84a4f"></div><svg style="left:813.3px;top:467.1px" width="4.8" height="4.6" viewBox="0 0 4.8 4.6"><path d="M0.4 0.3 L4.4 4.3 M4.4 0.3 L0.4 4.3" stroke="#fff" stroke-width="1.55"/></svg><div class="a" style="left:605.2px;top:485.2px;width:219.8px;height:18.6px;background:#f4f4f4;border-bottom:1px solid #fcfcfc"></div><div class="a" style="left:606.6px;top:484.8px;width:45.0px;height:19.6px;background:#f6f6f6;border-top:1px solid #fdfdfd;border-left:1px solid #fdfdfd;border-radius:3px 0 0 0"></div><span class="t" id="t30" style="left:610.16px;top:486.75px;transform:scaleX(1.2252);font-size:11px;font-family:'IPAGothic','Liberation Sans',sans-serif;"><span style="display:inline-block;width:30.14px;height:11px;vertical-align:baseline"><span style="display:inline-block;font-size:12.87px;transform:scaleX(0.585);transform-origin:0 100%;white-space:nowrap">レイヤー</span></span></span><span class="t" id="t31" style="left:655.98px;top:489.20px;transform:scaleX(1.2964);font-size:11px;font-family:'IPAGothic','Liberation Sans',sans-serif;"><span style="display:inline-block;width:30.14px;height:11px;vertical-align:baseline"><span style="display:inline-block;font-size:12.87px;transform:scaleX(0.585);transform-origin:0 100%;white-space:nowrap">フレーム</span></span></span><span class="t" id="t32" style="left:704.92px;top:489.95px;transform:scaleX(1.1687);font-size:11px;font-family:'IPAGothic','Liberation Sans',sans-serif;"><span style="display:inline-block;width:30.14px;height:11px;vertical-align:baseline"><span style="display:inline-block;font-size:12.87px;transform:scaleX(0.585);transform-origin:0 100%;white-space:nowrap">スタイル</span></span></span><div class="a" style="left:652px;top:486.8px;width:1.1px;height:18px;background:#000"></div><div class="a" style="left:699.2px;top:489.59999999999997px;width:1.1px;height:13.2px;background:#000"></div><div class="a" style="left:744.5px;top:489.59999999999997px;width:1.1px;height:13.2px;background:#000"></div><div class="a" style="left:809px;top:486.4px;width:15.2px;height:14.2px;background:#f0f0f0;border-top:1px solid #fff;border-left:1px solid #fff;border-right:1px solid #6a6a6a;border-bottom:1px solid #6a6a6a;box-shadow:inset -1px -1px 0 #a6a6a6"></div><svg style="left:814.4px;top:490.09999999999997px" width="3.4" height="6.2" viewBox="0 0 3.4 6.2"><path d="M0 0 L3.4 3.1 L0 6.2 Z" fill="#000"/></svg><div class="a" style="left:604.8px;top:456.8px;width:220.6px;height:7px;background:linear-gradient(rgba(40,50,70,.14),rgba(40,50,70,0))"></div><div class="a" style="left:609.6px;top:510.8px;width:130.4px;height:18px;background:#fff;border-top:1px solid #8a8a8a;border-left:1px solid #8a8a8a;border-right:1px solid #fdfdfd;border-bottom:1px solid #fdfdfd;box-shadow:inset 1px 1px 0 #8a8a8a,inset -1px -1px 0 #e6e6e6"></div><span class="t" id="t33" style="left:611.19px;top:512.30px;transform:scaleX(1.2897);font-size:12px;font-family:'IPAGothic','Liberation Sans',sans-serif;"><span style="display:inline-block;width:32.88px;height:12px;vertical-align:baseline"><span style="display:inline-block;font-size:14.04px;transform:scaleX(0.585);transform-origin:0 100%;white-space:nowrap">フレーム</span></span> 1</span><div class="a" style="left:723.6px;top:512.4px;width:15.4px;height:15px;background:#f0f0f0;border-top:1px solid #fff;border-left:1px solid #fff;border-right:1px solid #6a6a6a;border-bottom:1px solid #6a6a6a;box-shadow:inset -1px -1px 0 #a6a6a6"></div><svg style="left:727.5px;top:517.7px" width="7.2" height="3.6" viewBox="0 0 7.2 3.6"><path d="M0 0 H7.2 L3.6 3.6 Z" fill="#000"/></svg><div class="a" style="left:609.6px;top:534.4px;width:207.4px;height:100.2px;background:#fff;border-top:1px solid #8a8a8a;border-left:1px solid #8a8a8a;border-right:1px solid #fdfdfd;border-bottom:1px solid #fdfdfd;box-shadow:inset 1px 1px 0 #8a8a8a,inset -1px -1px 0 #e6e6e6"></div><div class="a" style="left:611px;top:536.2px;width:189.6px;height:30.6px;background:#f0f0f0"></div><div class="a" style="left:651.6px;top:536.2px;width:149px;height:15.2px;background:#fff"></div><div class="a" style="left:651.6px;top:551.8px;width:149px;height:14.6px;background:#0a78d7"></div><div class="a" style="left:611px;top:535.6px;width:189.6px;height:1.2px;background:#000"></div><div class="a" style="left:611px;top:551px;width:189.6px;height:1.2px;background:#000"></div><div class="a" style="left:611px;top:566.2px;width:206px;height:1.2px;background:#000"></div><div class="a" style="left:630.6px;top:536px;width:1.2px;height:30.8px;background:#000"></div><div class="a" style="left:651px;top:536px;width:1.2px;height:30.8px;background:#000"></div><div class="a" style="left:800px;top:536px;width:1.2px;height:30.8px;background:#000"></div><svg style="left:614.6px;top:538.8px" width="14" height="10" viewBox="0 0 14 10"><path d="M0.4 5 H2.2 M3.2 5 H5.2" stroke="#000" stroke-width="1.1"/><path d="M5.4 0.6 Q10.4 1.6 13.2 5 Q10.4 8.4 5.4 9.4" fill="none" stroke="#000" stroke-width="1.1"/><path d="M7.4 1.6 Q10 5 7.4 8.4" fill="none" stroke="#000" stroke-width="1.1"/><path d="M9.6 2.6 Q11.4 5 9.6 7.4" fill="none" stroke="#000" stroke-width="1"/></svg><svg style="left:614.6px;top:554.2px" width="14" height="10" viewBox="0 0 14 10"><path d="M0.4 5 H2.2 M3.2 5 H5.2" stroke="#000" stroke-width="1.1"/><path d="M5.4 0.6 Q10.4 1.6 13.2 5 Q10.4 8.4 5.4 9.4" fill="none" stroke="#000" stroke-width="1.1"/><path d="M7.4 1.6 Q10 5 7.4 8.4" fill="none" stroke="#000" stroke-width="1.1"/><path d="M9.6 2.6 Q11.4 5 9.6 7.4" fill="none" stroke="#000" stroke-width="1"/></svg><span class="t" id="t34" style="left:655.30px;top:535.30px;transform:scaleX(1.1910);font-size:12px;font-family:'IPAGothic','Liberation Sans',sans-serif;">Web <span style="display:inline-block;width:32.88px;height:12px;vertical-align:baseline"><span style="display:inline-block;font-size:14.04px;transform:scaleX(0.585);transform-origin:0 100%;white-space:nowrap">レイヤー</span></span></span><span class="t" id="t35" style="left:653.03px;top:550.55px;transform:scaleX(1.2864);font-size:12px;color:#fff;font-family:'IPAGothic','Liberation Sans',sans-serif;"><span style="display:inline-block;width:32.88px;height:12px;vertical-align:baseline"><span style="display:inline-block;font-size:14.04px;transform:scaleX(0.585);transform-origin:0 100%;white-space:nowrap">レイヤー</span></span> 1</span><svg style="left:785.4px;top:539.6px" width="12" height="8" viewBox="0 0 12 8"><path d="M0 4 L2.5 1.5 V6.5 Z M12 4 L9.5 1.5 V6.5 Z" fill="#808080"/><rect x="3.6" y=".5" width="4.8" height="7" fill="none" stroke="#808080" stroke-width="1"/><path d="M6 .5 V7.5 M3.6 4 H8.4" stroke="#808080" stroke-width=".8"/></svg><div class="a" style="left:731.6px;top:640.2px;width:27px;height:19.4px;background:#f0f0f0;border-top:1px solid #fff;border-left:1px solid #fff;border-right:1px solid #6a6a6a;border-bottom:1px solid #6a6a6a;box-shadow:inset -1px -1px 0 #a6a6a6"></div><div class="a" style="left:762.2px;top:640.2px;width:27.2px;height:19.4px;background:#f0f0f0;border-top:1px solid #fff;border-left:1px solid #fff;border-right:1px solid #6a6a6a;border-bottom:1px solid #6a6a6a;box-shadow:inset -1px -1px 0 #a6a6a6"></div><div class="a" style="left:790.8px;top:640.2px;width:27px;height:19.4px;background:#f0f0f0;border-top:1px solid #fff;border-left:1px solid #fff;border-right:1px solid #6a6a6a;border-bottom:1px solid #6a6a6a;box-shadow:inset -1px -1px 0 #a6a6a6"></div><svg style="left:738px;top:645px" width="14" height="9.4" viewBox="0 0 14 9.4"><path d="M0 3.6 H4 V1.2 L7.6 4.7 L4 8.2 V5.8 H0 Z" fill="#000"/><path d="M8.8 0 V9.4 M13 0 V9.4 M8.8 0.8 H13 M8.8 4.7 H13 M8.8 8.6 H13" fill="none" stroke="#000" stroke-width="1.3"/></svg><svg style="left:771.6px;top:644.2px" width="9" height="9.6" viewBox="0 0 9 9.6"><path d="M.8 .8 H7.9 V8.8 H.8 Z" fill="#fff" stroke="#000" stroke-width="1.5"/><rect x="1.8" y="5.2" width="2.8" height="2.8" fill="none" stroke="#000" stroke-width=".9"/></svg><svg style="left:798.4px;top:644px" width="10.4" height="10" viewBox="0 0 10.4 10"><path d="M0.4 2.8 H10 M3.6 2.6 V.8 H6.8 V2.6" fill="none" stroke="#000" stroke-width="1.4"/><path d="M1.4 4 H9 L8.4 9.8 H2 Z" fill="#000"/><path d="M3.5 4.6 V9 M5.2 4.6 V9 M6.9 4.6 V9" stroke="#fff" stroke-width=".75"/></svg>
<div class="a" style="left:603.8px;top:284px;width:226px;height:172.6px;background:#f0f0f0;border-radius:5px 5px 3px 3px;box-shadow:4.5px 4.5px 1.6px 0 rgba(0,0,0,0.16), 0 0 0 .6px rgba(120,120,120,.5)"></div><div class="a" style="left:603.8px;top:284px;width:226px;height:33.60000000000002px;background:linear-gradient(#f0f5fa 0,#edf3f9 55%,#f0f3f7 85%,#f4f4f5 100%);border-radius:5px 5px 0 0"></div><div class="a" style="left:810.2px;top:290.6px;width:18.6px;height:18.6px;background:#c84a4f"></div><svg style="left:817.1px;top:297.70000000000005px" width="4.8" height="4.6" viewBox="0 0 4.8 4.6"><path d="M0.4 0.3 L4.4 4.3 M4.4 0.3 L0.4 4.3" stroke="#fff" stroke-width="1.55"/></svg><div class="a" style="left:604.8px;top:315.6px;width:224px;height:18.6px;background:#f4f4f4;border-bottom:1px solid #fcfcfc"></div><div class="a" style="left:606.4px;top:315.20000000000005px;width:45.39999999999998px;height:19.6px;background:#f6f6f6;border-top:1px solid #fdfdfd;border-left:1px solid #fdfdfd;border-radius:3px 0 0 0"></div><span class="t" id="t20" style="left:609.02px;top:318.40px;transform:scaleX(1.2673);font-size:11px;font-family:'IPAGothic','Liberation Sans',sans-serif;"><span style="display:inline-block;width:30.14px;height:11px;vertical-align:baseline"><span style="display:inline-block;font-size:12.87px;transform:scaleX(0.585);transform-origin:0 100%;white-space:nowrap">ミキサー</span></span></span><span class="t" id="t21" style="left:657.20px;top:320.85px;transform:scaleX(0.9333);font-size:11px;font-family:'IPAGothic','Liberation Sans',sans-serif;">色見本</span><span class="t" id="t22" style="left:697.75px;top:320.10px;transform:scaleX(1.1306);font-size:11px;font-family:'IPAGothic','Liberation Sans',sans-serif;"><span style="display:inline-block;width:37.67px;height:11px;vertical-align:baseline"><span style="display:inline-block;font-size:12.87px;transform:scaleX(0.585);transform-origin:0 100%;white-space:nowrap">オプション</span></span></span><span class="t" id="t23" style="left:749.43px;top:320.60px;transform:scaleX(0.9381);font-size:11px;font-family:'IPAGothic','Liberation Sans',sans-serif;">情報</span><div class="a" style="left:652.2px;top:317.20000000000005px;width:1.1px;height:18px;background:#000"></div><div class="a" style="left:692.4px;top:320.0px;width:1.1px;height:13.2px;background:#000"></div><div class="a" style="left:744.7px;top:320.0px;width:1.1px;height:13.2px;background:#000"></div><div class="a" style="left:774.5px;top:320.0px;width:1.1px;height:13.2px;background:#000"></div><div class="a" style="left:813px;top:316.8px;width:15.2px;height:14.2px;background:#f0f0f0;border-top:1px solid #fff;border-left:1px solid #fff;border-right:1px solid #6a6a6a;border-bottom:1px solid #6a6a6a;box-shadow:inset -1px -1px 0 #a6a6a6"></div><svg style="left:818.4px;top:320.5px" width="3.4" height="6.2" viewBox="0 0 3.4 6.2"><path d="M0 0 L3.4 3.1 L0 6.2 Z" fill="#000"/></svg><div class="a" style="left:604.4px;top:289.2px;width:225px;height:8px;background:linear-gradient(rgba(40,50,70,.16),rgba(40,50,70,0))"></div><div class="a" style="left:611.5px;top:343.6px;width:27.6px;height:16.4px;background:#000"></div><div class="a" style="left:641px;top:343.6px;width:10.4px;height:17.2px;background:#f0f0f0;border-top:1px solid #fff;border-left:1px solid #fff;border-right:2px solid #8e8e8e;border-bottom:2px solid #8e8e8e"></div><svg style="left:642.7px;top:349.85px" width="6.2" height="3.1" viewBox="0 0 6.2 3.1"><path d="M0 0 H6.2 L3.1 3.1 Z" fill="#000"/></svg><svg style="left:662.5px;top:342.6px" width="18" height="17.5" viewBox="0 0 18 17.5"><path d="M16 0.5 L9.2 7.7" stroke="#10108c" stroke-width="2.2" stroke-linecap="round"/><path d="M9.4 7.4 L7.2 11" stroke="#000" stroke-width="1.2"/><path d="M5.6 9.8 L7.8 12.2 L3 17 L0.9 14.7 Z" fill="#f4f4f4" stroke="#404040" stroke-width=".9"/><path d="M4.6 12 L2.6 14 M6 13 L4 15" stroke="#505050" stroke-width=".7"/></svg><div class="a" style="left:611.5px;top:368.4px;width:27.6px;height:16.2px;background:#3f3f3f"></div><div class="a" style="left:641px;top:368.4px;width:10.4px;height:17.2px;background:#f0f0f0;border-top:1px solid #fff;border-left:1px solid #fff;border-right:2px solid #8e8e8e;border-bottom:2px solid #8e8e8e"></div><svg style="left:642.7px;top:374.65px" width="6.2" height="3.1" viewBox="0 0 6.2 3.1"><path d="M0 0 H6.2 L3.1 3.1 Z" fill="#000"/></svg><svg style="left:662.5px;top:368px" width="18" height="17" viewBox="0 0 18 17"><path d="M4 8.3 L10.5 2.8 L16.3 9.3 L10.5 15.5 Z" fill="#fff" stroke="#000" stroke-width="1.2"/><path d="M5.8 9.8 L11.8 4.6" stroke="#000" stroke-width=".8"/><path d="M5.4 5.4 C3 5.6 2.2 7 2.2 9 V15.6" fill="none" stroke="#000" stroke-width="2.5"/><path d="M8 8 V2.6 C8 0 12 0 12 2.6 V4.6" fill="none" stroke="#000" stroke-width="2.1"/><path d="M8 8 V2.6 C8 0 12 0 12 2.6 V4.6" fill="none" stroke="#fff" stroke-width=".8"/></svg><span class="t" id="t24" style="left:703.50px;top:346.65px;transform:scaleX(1.0038);font-size:12px;font-family:'Liberation Sans',sans-serif;">R :</span><div class="a" style="left:725.3px;top:344.5px;width:42.5px;height:19.2px;background:#fff;border-top:1px solid #8a8a8a;border-left:1px solid #8a8a8a;border-right:1px solid #fdfdfd;border-bottom:1px solid #fdfdfd;box-shadow:inset 1px 1px 0 #8a8a8a,inset -1px -1px 0 #e6e6e6"></div><span class="t" id="t25" style="left:728.80px;top:348.15px;transform:scaleX(1.0732);font-size:11.5px;font-family:'IPAGothic','Liberation Sans',sans-serif;">00</span><div class="a" style="left:769.4px;top:346.0px;width:17.3px;height:19.4px;background:#f0f0f0;border-top:1px solid #fff;border-left:1px solid #fff;border-right:1px solid #6a6a6a;border-bottom:1px solid #6a6a6a;box-shadow:inset -1px -1px 0 #a6a6a6"></div><svg style="left:774.6499999999999px;top:353.7px" width="6.4" height="3.2" viewBox="0 0 6.4 3.2"><path d="M0 0 H6.4 L3.2 3.2 Z" fill="#000"/></svg><span class="t" id="t26" style="left:703.21px;top:370.65px;transform:scaleX(0.9724);font-size:12px;font-family:'Liberation Sans',sans-serif;">G :</span><div class="a" style="left:725.3px;top:368.5px;width:42.5px;height:19.2px;background:#fff;border-top:1px solid #8a8a8a;border-left:1px solid #8a8a8a;border-right:1px solid #fdfdfd;border-bottom:1px solid #fdfdfd;box-shadow:inset 1px 1px 0 #8a8a8a,inset -1px -1px 0 #e6e6e6"></div><span class="t" id="t27" style="left:728.80px;top:372.15px;transform:scaleX(1.0732);font-size:11.5px;font-family:'IPAGothic','Liberation Sans',sans-serif;">00</span><div class="a" style="left:769.4px;top:370.0px;width:17.3px;height:19.4px;background:#f0f0f0;border-top:1px solid #fff;border-left:1px solid #fff;border-right:1px solid #6a6a6a;border-bottom:1px solid #6a6a6a;box-shadow:inset -1px -1px 0 #a6a6a6"></div><svg style="left:774.6499999999999px;top:377.7px" width="6.4" height="3.2" viewBox="0 0 6.4 3.2"><path d="M0 0 H6.4 L3.2 3.2 Z" fill="#000"/></svg><span class="t" id="t28" style="left:703.44px;top:394.55px;transform:scaleX(1.0640);font-size:12px;font-family:'Liberation Sans',sans-serif;">B :</span><div class="a" style="left:725.3px;top:392.4px;width:42.5px;height:19.2px;background:#fff;border-top:1px solid #8a8a8a;border-left:1px solid #8a8a8a;border-right:1px solid #fdfdfd;border-bottom:1px solid #fdfdfd;box-shadow:inset 1px 1px 0 #8a8a8a,inset -1px -1px 0 #e6e6e6"></div><span class="t" id="t29" style="left:728.80px;top:396.05px;transform:scaleX(1.0732);font-size:11.5px;font-family:'IPAGothic','Liberation Sans',sans-serif;">00</span><div class="a" style="left:769.4px;top:393.9px;width:17.3px;height:19.4px;background:#f0f0f0;border-top:1px solid #fff;border-left:1px solid #fff;border-right:1px solid #6a6a6a;border-bottom:1px solid #6a6a6a;box-shadow:inset -1px -1px 0 #a6a6a6"></div><svg style="left:774.6499999999999px;top:401.59999999999997px" width="6.4" height="3.2" viewBox="0 0 6.4 3.2"><path d="M0 0 H6.4 L3.2 3.2 Z" fill="#000"/></svg><div class="a" style="left:608.2px;top:392.4px;width:25.6px;height:20.2px;background:#f0f0f0;border-top:1px solid #fff;border-left:1px solid #fff;border-right:1px solid #6a6a6a;border-bottom:1px solid #6a6a6a;box-shadow:inset -1px -1px 0 #a6a6a6"></div><svg style="left:616.2px;top:397.2px" width="10.6" height="10" viewBox="0 0 10.6 10"><rect x="2.7" y="2.7" width="7.2" height="6.8" fill="#fff" stroke="#000" stroke-width="1.3"/><rect x="0" y="0" width="6.7" height="6.6" fill="#000"/></svg><div class="a" style="left:635.8px;top:392.4px;width:26px;height:20.2px;background:#f0f0f0;border-top:1px solid #fff;border-left:1px solid #fff;border-right:1px solid #6a6a6a;border-bottom:1px solid #6a6a6a;box-shadow:inset -1px -1px 0 #a6a6a6"></div><svg style="left:644.6px;top:396px" width="9" height="12.4" viewBox="0 0 9 12.4"><path d="M0.8 3 H4.6 C9.4 3 9.4 9.4 4.6 9.4 H0.8" fill="none" stroke="#000" stroke-width="1.15"/><path d="M3.2 0.6 L0.8 3 L3.2 5.4" fill="none" stroke="#000" stroke-width="1.1"/><path d="M3.2 7 L0.8 9.4 L3.2 11.8" fill="none" stroke="#000" stroke-width="1.1"/></svg><div class="a" style="left:608.2px;top:416px;width:218.6px;height:35.4px;border:1px solid #202020;background:linear-gradient(rgba(255,255,255,.95) 0,rgba(255,255,255,.6) 9%,rgba(255,255,255,.22) 28%,rgba(255,255,255,0) 46%,rgba(0,0,0,0) 68%,rgba(0,0,0,.2) 83%,rgba(0,0,0,.55) 94%,rgba(0,0,0,.9) 100%),radial-gradient(ellipse 9% 75% at 17% 0,rgba(255,255,255,.75),rgba(255,255,255,0)),radial-gradient(ellipse 9% 75% at 50% 0,rgba(255,255,255,.7),rgba(255,255,255,0)),radial-gradient(ellipse 9% 75% at 84% 0,rgba(255,255,255,.7),rgba(255,255,255,0)),linear-gradient(90deg,#e80808 0,#f06010 7%,#f8f020 17%,#50e020 25%,#10c818 34%,#20d8a0 43%,#30e8e8 50%,#2080e0 58%,#2020d8 67%,#9020e0 76%,#f030f0 84%,#f01880 93%,#e80808 100%)"></div>
<div class="a" style="left:603.8px;top:70.5px;width:224.5px;height:218.3px;background:#f0f0f0;border-radius:5px 5px 3px 3px;box-shadow:4.5px 4.5px 1.6px 0 rgba(0,0,0,0.16), 0 0 0 .6px rgba(120,120,120,.5)"></div><div class="a" style="left:603.8px;top:70.5px;width:224.5px;height:34.5px;background:linear-gradient(#f0f5fa 0,#edf3f9 55%,#f0f3f7 85%,#f4f4f5 100%);border-radius:5px 5px 0 0"></div><div class="a" style="left:808.2px;top:78.2px;width:18.6px;height:18.6px;background:#c84a4f"></div><svg style="left:815.1px;top:85.3px" width="4.8" height="4.6" viewBox="0 0 4.8 4.6"><path d="M0.4 0.3 L4.4 4.3 M4.4 0.3 L0.4 4.3" stroke="#fff" stroke-width="1.55"/></svg><div class="a" style="left:604.8px;top:103px;width:222.5px;height:18.6px;background:#f4f4f4;border-bottom:1px solid #fcfcfc"></div><div class="a" style="left:605.6px;top:102.6px;width:57.39999999999998px;height:19.6px;background:#f6f6f6;border-top:1px solid #fdfdfd;border-left:1px solid #fdfdfd;border-radius:3px 0 0 0"></div><span class="t" id="t13" style="left:611.01px;top:106.30px;transform:scaleX(1.0512);font-size:11px;font-family:'IPAGothic','Liberation Sans',sans-serif;"><span style="display:inline-block;width:45.21px;height:11px;vertical-align:baseline"><span style="display:inline-block;font-size:12.87px;transform:scaleX(0.585);transform-origin:0 100%;white-space:nowrap">オブジェクト</span></span></span><span class="t" id="t14" style="left:668.95px;top:107.50px;transform:scaleX(1.1268);font-size:11px;font-family:'IPAGothic','Liberation Sans',sans-serif;"><span style="display:inline-block;width:37.67px;height:11px;vertical-align:baseline"><span style="display:inline-block;font-size:12.87px;transform:scaleX(0.585);transform-origin:0 100%;white-space:nowrap">ストローク</span></span></span><span class="t" id="t15" style="left:720.40px;top:107.50px;transform:scaleX(1.2000);font-size:11px;font-family:'IPAGothic','Liberation Sans',sans-serif;">塗<span style="display:inline-block;width:7.54px;height:11px;vertical-align:baseline"><span style="display:inline-block;font-size:12.87px;transform:scaleX(0.585);transform-origin:0 100%;white-space:nowrap">り</span></span></span><span class="t" id="t16" style="left:747.20px;top:107.00px;transform:scaleX(1.0704);font-size:11px;font-family:'IPAGothic','Liberation Sans',sans-serif;"><span style="display:inline-block;width:37.67px;height:11px;vertical-align:baseline"><span style="display:inline-block;font-size:12.87px;transform:scaleX(0.585);transform-origin:0 100%;white-space:nowrap">エフェクト</span></span></span><div class="a" style="left:663.4px;top:104.6px;width:1.1px;height:18px;background:#000"></div><div class="a" style="left:715.2px;top:107.4px;width:1.1px;height:13.2px;background:#000"></div><div class="a" style="left:742.4px;top:107.4px;width:1.1px;height:13.2px;background:#000"></div><div class="a" style="left:790.3px;top:107.4px;width:1.1px;height:13.2px;background:#000"></div><div class="a" style="left:811.6px;top:104.2px;width:15.2px;height:14.2px;background:#f0f0f0;border-top:1px solid #fff;border-left:1px solid #fff;border-right:1px solid #6a6a6a;border-bottom:1px solid #6a6a6a;box-shadow:inset -1px -1px 0 #a6a6a6"></div><svg style="left:817.0px;top:107.9px" width="3.4" height="6.2" viewBox="0 0 3.4 6.2"><path d="M0 0 L3.4 3.1 L0 6.2 Z" fill="#000"/></svg><span class="t" id="t17" style="left:663.64px;top:124.70px;transform:scaleX(1.1468);font-size:12.3px;">選択<span style="display:inline-block;width:67.40px;height:12.3px;vertical-align:baseline"><span style="display:inline-block;font-size:14.39px;transform:scaleX(0.585);transform-origin:0 100%;white-space:nowrap">オブジェクトなし</span></span></span><div class="a" style="left:608px;top:140px;width:214px;height:1px;background:#a0a0a0"></div><div class="a" style="left:608px;top:141px;width:214px;height:1px;background:#fcfcfc"></div><svg style="left:608px;top:148px" width="10.4" height="13.6" viewBox="0 0 10.4 13.6"><rect x=".6" y=".6" width="9.2" height="12.4" fill="#fff" stroke="#000" stroke-width="1.2"/><rect x="1.2" y="1.2" width="4" height="4" fill="#a0a0a0"/><rect x="5.2" y="5.2" width="4" height="4" fill="#a0a0a0"/><rect x="1.2" y="9.2" width="4" height="3.2" fill="#a0a0a0"/></svg><div class="a" style="left:627.2px;top:148px;width:38.4px;height:16.8px;background:#fff;border-top:1px solid #8a8a8a;border-left:1px solid #8a8a8a;border-right:1px solid #fdfdfd;border-bottom:1px solid #fdfdfd;box-shadow:inset 1px 1px 0 #8a8a8a,inset -1px -1px 0 #e6e6e6"></div><span class="t" id="t18" style="left:631.23px;top:152.05px;transform:scaleX(1.0194);font-size:11.5px;font-family:'IPAGothic','Liberation Sans',sans-serif;">100</span><div class="a" style="left:671.4px;top:148px;width:17.2px;height:17.2px;background:#f0f0f0;border-top:1px solid #fff;border-left:1px solid #fff;border-right:1px solid #6a6a6a;border-bottom:1px solid #6a6a6a;box-shadow:inset -1px -1px 0 #a6a6a6"></div><svg style="left:676.1999999999999px;top:154.39999999999998px" width="7.2" height="3.6" viewBox="0 0 7.2 3.6"><path d="M0 0 H7.2 L3.6 3.6 Z" fill="#000"/></svg><div class="a" style="left:697.4px;top:148px;width:126px;height:17.6px;background:#fff;border-top:1px solid #8a8a8a;border-left:1px solid #8a8a8a;border-right:1px solid #fdfdfd;border-bottom:1px solid #fdfdfd;box-shadow:inset 1px 1px 0 #8a8a8a,inset -1px -1px 0 #e6e6e6"></div><span class="t" id="t19" style="left:700.22px;top:151.30px;transform:scaleX(1.0337);font-size:12px;">通常</span><div class="a" style="left:805.4px;top:149.6px;width:16.6px;height:15px;background:#f0f0f0;border-top:1px solid #fff;border-left:1px solid #fff;border-right:1px solid #6a6a6a;border-bottom:1px solid #6a6a6a;box-shadow:inset -1px -1px 0 #a6a6a6"></div><svg style="left:809.8999999999999px;top:154.89999999999998px" width="7.2" height="3.6" viewBox="0 0 7.2 3.6"><path d="M0 0 H7.2 L3.6 3.6 Z" fill="#000"/></svg>
<div class="a" style="left:184px;top:450.6px;width:386.9px;height:217px;background:#f0f0f0;border-radius:5px 5px 3px 3px;box-shadow:4.5px 4.5px 1.6px 0 rgba(0,0,0,0.07), 0 0 0 .6px rgba(120,120,120,.5)"></div><div class="a" style="left:184px;top:450.6px;width:386.9px;height:35.39999999999998px;background:linear-gradient(#f0f5fa 0,#edf3f9 55%,#f0f3f7 85%,#f4f4f5 100%);border-radius:5px 5px 0 0"></div><div class="a" style="left:551.4px;top:458.4px;width:18.6px;height:18.6px;background:#c84a4f"></div><svg style="left:558.3px;top:465.5px" width="4.8" height="4.6" viewBox="0 0 4.8 4.6"><path d="M0.4 0.3 L4.4 4.3 M4.4 0.3 L0.4 4.3" stroke="#fff" stroke-width="1.55"/></svg><div class="a" style="left:185px;top:484px;width:384.9px;height:18.6px;background:#f4f4f4;border-bottom:1px solid #fcfcfc"></div><div class="a" style="left:186.4px;top:483.6px;width:52.599999999999994px;height:19.6px;background:#f6f6f6;border-top:1px solid #fdfdfd;border-left:1px solid #fdfdfd;border-radius:3px 0 0 0"></div><span class="t" id="t36" style="left:189.12px;top:487.05px;transform:scaleX(1.2539);font-size:11px;font-family:'IPAGothic','Liberation Sans',sans-serif;"><span style="display:inline-block;width:37.67px;height:11px;vertical-align:baseline"><span style="display:inline-block;font-size:12.87px;transform:scaleX(0.585);transform-origin:0 100%;white-space:nowrap">ビヘイビア</span></span></span><span class="t" id="t37" style="left:244.35px;top:487.75px;transform:scaleX(1.1270);font-size:11px;font-family:'IPAGothic','Liberation Sans',sans-serif;">URL <span style="display:inline-block;width:37.67px;height:11px;vertical-align:baseline"><span style="display:inline-block;font-size:12.87px;transform:scaleX(0.585);transform-origin:0 100%;white-space:nowrap">マネージャ</span></span></span><span class="t" id="t38" style="left:319.98px;top:489.25px;transform:scaleX(0.8703);font-size:11px;font-family:'IPAGothic','Liberation Sans',sans-serif;">検索 / 置換</span><span class="t" id="t39" style="left:379.00px;top:489.25px;transform:scaleX(1.1166);font-size:11px;font-family:'IPAGothic','Liberation Sans',sans-serif;"><span style="display:inline-block;width:60.28px;height:11px;vertical-align:baseline"><span style="display:inline-block;font-size:12.87px;transform:scaleX(0.585);transform-origin:0 100%;white-space:nowrap">プロジェクトログ</span></span></span><div class="a" style="left:239.4px;top:485.6px;width:1.1px;height:18px;background:#000"></div><div class="a" style="left:314.6px;top:488.4px;width:1.1px;height:13.2px;background:#000"></div><div class="a" style="left:375.6px;top:488.4px;width:1.1px;height:13.2px;background:#000"></div><div class="a" style="left:450.6px;top:488.4px;width:1.1px;height:13.2px;background:#000"></div><div class="a" style="left:553px;top:485.2px;width:15.2px;height:14.2px;background:#f0f0f0;border-top:1px solid #fff;border-left:1px solid #fff;border-right:1px solid #6a6a6a;border-bottom:1px solid #6a6a6a;box-shadow:inset -1px -1px 0 #a6a6a6"></div><svg style="left:558.4px;top:488.9px" width="3.4" height="6.2" viewBox="0 0 3.4 6.2"><path d="M0 0 L3.4 3.1 L0 6.2 Z" fill="#000"/></svg><div class="a" style="left:189px;top:508.4px;width:26.8px;height:20px;background:#f0f0f0;border-top:1px solid #fff;border-left:1px solid #fff;border-right:1px solid #6a6a6a;border-bottom:1px solid #6a6a6a;box-shadow:inset -1px -1px 0 #a6a6a6"></div><svg style="left:196.6px;top:513px" width="12" height="11" viewBox="0 0 12 11"><path d="M0 4.5 H9 M4.5 0 V9" stroke="#000" stroke-width="1.5"/><path d="M7 7.6 H11.4 L9.2 10.4 Z" fill="#000"/></svg><div class="a" style="left:223.6px;top:508.4px;width:27.4px;height:20px;background:#f0f0f0;border-top:1px solid #fff;border-left:1px solid #fff;border-right:1px solid #6a6a6a;border-bottom:1px solid #6a6a6a;box-shadow:inset -1px -1px 0 #a6a6a6"></div><div class="a" style="left:231.6px;top:517.6px;width:10.6px;height:1.5px;background:#000"></div><div class="a" style="left:541.2px;top:508.4px;width:25.8px;height:20px;background:#f0f0f0;border-top:1px solid #fff;border-left:1px solid #fff;border-right:1px solid #6a6a6a;border-bottom:1px solid #6a6a6a;box-shadow:inset -1px -1px 0 #a6a6a6"></div><svg style="left:547.6px;top:512px" width="13.6" height="13.6" viewBox="0 0 13.6 13.6"><circle cx="6.8" cy="6.8" r="6" fill="#b6b6b6" stroke="#1a1a1a" stroke-width="1.3"/><text x="4" y="10.4" font-family="Liberation Sans,sans-serif" font-weight="bold" font-size="10" fill="#1a1a1a">?</text></svg><div class="a" style="left:189px;top:533.2px;width:373px;height:126.4px;background:#fff;border-top:1.6px solid #7a7a7a;border-left:1.6px solid #7a7a7a;border-right:1px solid #e4e4e4;border-bottom:1px solid #e4e4e4"></div><div class="a" style="left:190.6px;top:534.8px;width:370.4px;height:15.6px;background:#f0f0f0;border-bottom:1px solid #7c7c7c;box-shadow:inset 0 -1px 0 #c4c4c4"></div><div class="a" style="left:275.8px;top:534.8px;width:1px;height:15px;background:#808080"></div><div class="a" style="left:276.8px;top:534.8px;width:1px;height:14px;background:#fff"></div><div class="a" style="left:385.2px;top:534.8px;width:1px;height:15px;background:#808080"></div><div class="a" style="left:386.2px;top:534.8px;width:1px;height:14px;background:#fff"></div><span class="t" id="t40" style="left:194.78px;top:536.25px;transform:scaleX(1.2231);font-size:12px;"><span style="display:inline-block;width:32.88px;height:12px;vertical-align:baseline"><span style="display:inline-block;font-size:14.04px;transform:scaleX(0.585);transform-origin:0 100%;white-space:nowrap">イベント</span></span></span><span class="t" id="t41" style="left:283.57px;top:536.00px;transform:scaleX(1.2256);font-size:12px;"><span style="display:inline-block;width:41.10px;height:12px;vertical-align:baseline"><span style="display:inline-block;font-size:14.04px;transform:scaleX(0.585);transform-origin:0 100%;white-space:nowrap">アクション</span></span></span><span class="t" id="t42" style="left:393.70px;top:536.90px;transform:scaleX(0.9913);font-size:12px;">情報</span><div class="a" style="left:190.6px;top:643px;width:370.4px;height:15.4px;background:#f0f0f0"></div><div class="a" style="left:207px;top:649.2px;width:279px;height:1.4px;background:#808080"></div>
<div class="a" style="left:0px;top:667px;width:847px;height:1px;background:#fafafa"></div><div class="a" style="left:7.5px;top:672.5px;width:62px;height:19.6px;background:#fff;border-top:1px solid #8a8a8a;border-left:1px solid #8a8a8a;border-right:1px solid #fdfdfd;border-bottom:1px solid #fdfdfd;box-shadow:inset 1px 1px 0 #8a8a8a,inset -1px -1px 0 #e6e6e6"></div><span class="t" id="t43" style="left:9.68px;top:677.75px;transform:scaleX(1.2941);font-size:11.4px;font-family:'IPAGothic','Liberation Sans',sans-serif;">100%</span><div class="a" style="left:54px;top:674.4px;width:15.6px;height:16.6px;background:#f0f0f0;border-top:1px solid #fff;border-left:1px solid #fff;border-right:1px solid #6a6a6a;border-bottom:1px solid #6a6a6a;box-shadow:inset -1px -1px 0 #a6a6a6"></div><svg style="left:57.99999999999999px;top:680.5px" width="7.2" height="3.6" viewBox="0 0 7.2 3.6"><path d="M0 0 H7.2 L3.6 3.6 Z" fill="#000"/></svg><div class="a" style="left:80px;top:672.5px;width:98px;height:19.6px;background:#fff;border-top:1px solid #8a8a8a;border-left:1px solid #8a8a8a;border-right:1px solid #fdfdfd;border-bottom:1px solid #fdfdfd;box-shadow:inset 1px 1px 0 #8a8a8a,inset -1px -1px 0 #e6e6e6"></div><span class="t" id="t44" style="left:82.83px;top:676.15px;transform:scaleX(1.1824);font-size:12.5px;"><span style="display:inline-block;width:17.12px;height:12.5px;vertical-align:baseline"><span style="display:inline-block;font-size:14.62px;transform:scaleX(0.585);transform-origin:0 100%;white-space:nowrap">フル</span></span>表示</span><div class="a" style="left:161.2px;top:674.4px;width:15.4px;height:16.6px;background:#f0f0f0;border-top:1px solid #fff;border-left:1px solid #fff;border-right:1px solid #6a6a6a;border-bottom:1px solid #6a6a6a;box-shadow:inset -1px -1px 0 #a6a6a6"></div><svg style="left:165.1px;top:680.5px" width="7.2" height="3.6" viewBox="0 0 7.2 3.6"><path d="M0 0 H7.2 L3.6 3.6 Z" fill="#000"/></svg><div class="a" style="left:196.3px;top:672.2px;width:22.5px;height:20.6px;background:#f0f0f0;border-top:1px solid #fff;border-left:1px solid #fff;border-right:1px solid #747474;border-bottom:1px solid #747474;box-shadow:inset -1px -1px 0 #c4c4c4"></div><svg style="left:198.70000000000002px;top:673.6px" width="17.6" height="17.6" viewBox="0 0 16 16"><path d="M4.2 2.6 H8.6 L11.2 5.2 V11.8 H4.2 Z" fill="#fff" stroke="#000" stroke-width="1.2"/><path d="M8.6 2.6 V5.2 H11.2" fill="none" stroke="#000" stroke-width=".9"/></svg><div class="a" style="left:225.4px;top:671px;width:1px;height:23px;background:#a0a0a0"></div><div class="a" style="left:226.4px;top:671px;width:1px;height:23px;background:#fff"></div><div class="a" style="left:233.6px;top:672.2px;width:22.5px;height:20.6px;background:#f0f0f0;border-top:1px solid #fff;border-left:1px solid #fff;border-right:1px solid #747474;border-bottom:1px solid #747474;box-shadow:inset -1px -1px 0 #c4c4c4"></div><svg style="left:236.0px;top:673.6px" width="17.6" height="17.6" viewBox="0 0 16 16"><path d="M2.6 2.6 H7.3 V7.3 H2.6 Z M8.7 2.6 H13.4 V7.3 H8.7 Z M2.6 8.7 H7.3 V13.4 H2.6 Z M8.7 8.7 H13.4 V13.4 H8.7 Z" fill="#a2a2a2"/><path d="M1 1 H3.8 V3.8 H1 Z M12.2 1 H15 V3.8 H12.2 Z M1 12.2 H3.8 V15 H1 Z M12.2 12.2 H15 V15 H12.2 Z" fill="#a2a2a2"/></svg><div class="a" style="left:256.45px;top:672.2px;width:22.5px;height:20.6px;background:#f0f0f0;border-top:1px solid #fff;border-left:1px solid #fff;border-right:1px solid #747474;border-bottom:1px solid #747474;box-shadow:inset -1px -1px 0 #c4c4c4"></div><svg style="left:258.84999999999997px;top:673.6px" width="17.6" height="17.6" viewBox="0 0 16 16"><path d="M2 2 H6.6 V6.6 H2 Z M9.4 2 H14 V6.6 H9.4 Z M2 9.4 H6.6 V14 H2 Z M9.4 9.4 H14 V14 H9.4 Z" fill="#a2a2a2"/><path d="M1 1 H3 V3 H1 Z M5.6 1 H7.6 V3 H5.6 Z M8.4 1 H10.4 V3 H8.4 Z M13 1 H15 V3 H13 Z M1 5.6 H3 V7.6 H1 Z M13 5.6 H15 V7.6 H13 Z M1 8.4 H3 V10.4 H1 Z M13 8.4 H15 V10.4 H13 Z M1 13 H3 V15 H1 Z M5.6 13 H7.6 V15 H5.6 Z M8.4 13 H10.4 V15 H8.4 Z M13 13 H15 V15 H13 Z M5.6 5.6 H7.6 V7.6 H5.6 Z M8.4 5.6 H10.4 V7.6 H8.4 Z M5.6 8.4 H7.6 V10.4 H5.6 Z M8.4 8.4 H10.4 V10.4 H8.4 Z" fill="#a2a2a2"/></svg><div class="a" style="left:279.3px;top:672.2px;width:22.5px;height:20.6px;background:#f0f0f0;border-top:1px solid #fff;border-left:1px solid #fff;border-right:1px solid #747474;border-bottom:1px solid #747474;box-shadow:inset -1px -1px 0 #c4c4c4"></div><svg style="left:281.7px;top:673.6px" width="17.6" height="17.6" viewBox="0 0 16 16"><path d="M1.8 2.2 H14.2 V8.6 L8 14.2 L1.8 8.6 Z" fill="#10107c" stroke="#000" stroke-width="1"/><path d="M3 9 H13 L10.6 6.2 C9.4 5 6.6 5 5.4 6.2 Z" fill="#fff"/></svg><div class="a" style="left:302.15px;top:672.2px;width:22.5px;height:20.6px;background:#f0f0f0;border-top:1px solid #fff;border-left:1px solid #fff;border-right:1px solid #747474;border-bottom:1px solid #747474;box-shadow:inset -1px -1px 0 #c4c4c4"></div><svg style="left:304.54999999999995px;top:673.6px" width="17.6" height="17.6" viewBox="0 0 16 16"><path d="M1.8 2.2 H14.2 V8 C14.2 11.4 11 14 8 14 C5 14 1.8 11.4 1.8 8 Z" fill="#a2a2a2"/><circle cx="8" cy="8.6" r="3.5" fill="#e6e6e6"/></svg><div class="a" style="left:333.2px;top:672.2px;width:22.5px;height:20.6px;background:#f0f0f0;border-top:1px solid #fff;border-left:1px solid #fff;border-right:1px solid #747474;border-bottom:1px solid #747474;box-shadow:inset -1px -1px 0 #c4c4c4"></div><svg style="left:335.59999999999997px;top:673.6px" width="17.6" height="17.6" viewBox="0 0 16 16"><defs><pattern id="ck" width="2" height="2" patternUnits="userSpaceOnUse"><rect width="2" height="2" fill="#d8d8d8"/><rect width="1" height="1" fill="#8c8c8c"/><rect x="1" y="1" width="1" height="1" fill="#8c8c8c"/></pattern></defs><rect x="6" y="6.5" width="9" height="8" fill="#a2a2a2"/><rect x="1.5" y="1.5" width="9" height="8" fill="url(#ck)" stroke="#a2a2a2" stroke-width="1"/></svg><div class="a" style="left:356.3px;top:672.2px;width:22.5px;height:20.6px;background:#f0f0f0;border-top:1px solid #fff;border-left:1px solid #fff;border-right:1px solid #747474;border-bottom:1px solid #747474;box-shadow:inset -1px -1px 0 #c4c4c4"></div><svg style="left:358.7px;top:673.6px" width="17.6" height="17.6" viewBox="0 0 16 16"><rect x="5.5" y="5.5" width="9.5" height="9" fill="#a2a2a2"/><rect x="1.5" y="1.5" width="10" height="9" fill="url(#ck)" stroke="#a2a2a2" stroke-width="1"/></svg><div class="a" style="left:379.4px;top:672.2px;width:22.5px;height:20.6px;background:#f0f0f0;border-top:1px solid #fff;border-left:1px solid #fff;border-right:1px solid #747474;border-bottom:1px solid #747474;box-shadow:inset -1px -1px 0 #c4c4c4"></div><svg style="left:381.79999999999995px;top:673.6px" width="17.6" height="17.6" viewBox="0 0 16 16"><rect x="1.5" y="1.5" width="10" height="9" fill="url(#ck)" stroke="#a2a2a2" stroke-width="1"/><rect x="5" y="5" width="10" height="9.5" fill="#a2a2a2"/></svg><div class="a" style="left:402.5px;top:672.2px;width:22.5px;height:20.6px;background:#f0f0f0;border-top:1px solid #fff;border-left:1px solid #fff;border-right:1px solid #747474;border-bottom:1px solid #747474;box-shadow:inset -1px -1px 0 #c4c4c4"></div><svg style="left:404.9px;top:673.6px" width="17.6" height="17.6" viewBox="0 0 16 16"><rect x="1.5" y="1.5" width="8" height="7.5" fill="url(#ck)" stroke="#808080" stroke-width="1"/><rect x="6.5" y="6.5" width="8.5" height="8" fill="#a2a2a2" stroke="#808080" stroke-width=".8"/></svg><div class="a" style="left:433.2px;top:672.2px;width:22.5px;height:20.6px;background:#f0f0f0;border-top:1px solid #fff;border-left:1px solid #fff;border-right:1px solid #747474;border-bottom:1px solid #747474;box-shadow:inset -1px -1px 0 #c4c4c4"></div><svg style="left:435.59999999999997px;top:673.6px" width="17.6" height="17.6" viewBox="0 0 16 16"><path d="M3.5 1.5 V14.5" stroke="#a2a2a2" stroke-width="1.3"/><rect x="5.5" y="3" width="7.5" height="3.4" fill="none" stroke="#a2a2a2" stroke-width="1.1"/><rect x="5.5" y="8" width="5" height="3.4" fill="none" stroke="#a2a2a2" stroke-width="1.1"/><path d="M5 13.4 H11 M5 13.4 L6.6 12.2 M5 13.4 L6.6 14.6" stroke="#a2a2a2" stroke-width=".9" fill="none"/></svg><div class="a" style="left:456.2px;top:672.2px;width:11.4px;height:20.6px;background:#f0f0f0;border-top:1px solid #fff;border-left:1px solid #fff;border-right:1px solid #747474;border-bottom:1px solid #747474;box-shadow:inset -1px -1px 0 #c4c4c4"></div><svg style="left:458.8px;top:680.2px" width="5.6" height="2.8" viewBox="0 0 5.6 2.8"><path d="M0 0 H5.6 L2.8 2.8 Z" fill="#000"/></svg><div class="a" style="left:476.3px;top:672.2px;width:22.5px;height:20.6px;background:#f0f0f0;border-top:1px solid #fff;border-left:1px solid #fff;border-right:1px solid #747474;border-bottom:1px solid #747474;box-shadow:inset -1px -1px 0 #c4c4c4"></div><svg style="left:478.7px;top:673.6px" width="17.6" height="17.6" viewBox="0 0 16 16"><path d="M1.5 13.5 L6 3 V13.5 Z" fill="#a2a2a2"/><path d="M7.5 13.5 V8 L14.5 13.5 Z" fill="none" stroke="#a2a2a2" stroke-width="1.1"/><path d="M8 5.5 C9.5 3 12.5 3.5 13 6.5 M8 5.5 L8.2 2.8 M8 5.5 L10.5 5.8" fill="none" stroke="#a2a2a2" stroke-width="1.2"/></svg><div class="a" style="left:499.05px;top:672.2px;width:22.5px;height:20.6px;background:#f0f0f0;border-top:1px solid #fff;border-left:1px solid #fff;border-right:1px solid #747474;border-bottom:1px solid #747474;box-shadow:inset -1px -1px 0 #c4c4c4"></div><svg style="left:501.45px;top:673.6px" width="17.6" height="17.6" viewBox="0 0 16 16"><path d="M14.5 13.5 L10 3 V13.5 Z" fill="#a2a2a2"/><path d="M8.5 13.5 V8 L1.5 13.5 Z" fill="none" stroke="#a2a2a2" stroke-width="1.1"/><path d="M8 5.5 C6.5 3 3.5 3.5 3 6.5 M8 5.5 L7.8 2.8 M8 5.5 L5.5 5.8" fill="none" stroke="#a2a2a2" stroke-width="1.2"/></svg><div class="a" style="left:521.8px;top:672.2px;width:22.5px;height:20.6px;background:#f0f0f0;border-top:1px solid #fff;border-left:1px solid #fff;border-right:1px solid #747474;border-bottom:1px solid #747474;box-shadow:inset -1px -1px 0 #c4c4c4"></div><svg style="left:524.1999999999999px;top:673.6px" width="17.6" height="17.6" viewBox="0 0 16 16"><path d="M7 2.5 V13.5 H2 Z" fill="none" stroke="#a2a2a2" stroke-width="1.1"/><path d="M9 2.5 V13.5 H14 Z" fill="#a2a2a2"/></svg><div class="a" style="left:544.55px;top:672.2px;width:22.5px;height:20.6px;background:#f0f0f0;border-top:1px solid #fff;border-left:1px solid #fff;border-right:1px solid #747474;border-bottom:1px solid #747474;box-shadow:inset -1px -1px 0 #c4c4c4"></div><svg style="left:546.9499999999999px;top:673.6px" width="17.6" height="17.6" viewBox="0 0 16 16"><path d="M2.5 7 H13.5 V2.5 Z" fill="none" stroke="#a2a2a2" stroke-width="1.1"/><path d="M2.5 9 H13.5 V13.5 Z" fill="#a2a2a2"/></svg><div class="a" style="left:574.4px;top:671px;width:1px;height:23px;background:#a0a0a0"></div><div class="a" style="left:575.4px;top:671px;width:1px;height:23px;background:#fff"></div>
<div class="a" style="left:0px;top:696.8px;width:847px;height:1px;background:#a0a0a0"></div><div class="a" style="left:0px;top:697.8px;width:847px;height:1px;background:#fff"></div><div class="a" style="left:0px;top:718.6px;width:847px;height:1.4px;background:#c6c6c6"></div><div class="a" style="left:1px;top:700.4px;width:183.4px;height:18px;border-top:1px solid #9a9a9a;border-left:1px solid #9a9a9a;border-right:1px solid #fff;border-bottom:1px solid #fff"></div><div class="a" style="left:187.4px;top:700.4px;width:22.6px;height:18px;border-top:1px solid #9a9a9a;border-left:1px solid #9a9a9a;border-right:1px solid #fff;border-bottom:1px solid #fff"></div><div class="a" style="left:212.6px;top:700.4px;width:493.4px;height:18px;border-top:1px solid #9a9a9a;border-left:1px solid #9a9a9a;border-right:1px solid #fff;border-bottom:1px solid #fff"></div><span class="t" id="t45" style="left:2.16px;top:702.25px;transform:scaleX(1.1263);font-size:13px;">選択<span style="display:inline-block;width:71.24px;height:13px;vertical-align:baseline"><span style="display:inline-block;font-size:15.21px;transform:scaleX(0.585);transform-origin:0 100%;white-space:nowrap">オブジェクトなし</span></span></span><span class="t" id="t46" style="left:214.12px;top:701.50px;transform:scaleX(1.1717);font-size:13px;"><span style="display:inline-block;width:62.34px;height:13px;vertical-align:baseline"><span style="display:inline-block;font-size:15.21px;transform:scaleX(0.585);transform-origin:0 100%;white-space:nowrap">オブジェクトを</span></span>選択<span style="display:inline-block;width:26.71px;height:13px;vertical-align:baseline"><span style="display:inline-block;font-size:15.21px;transform:scaleX(0.585);transform-origin:0 100%;white-space:nowrap">または</span></span>移動<span style="display:inline-block;width:26.71px;height:13px;vertical-align:baseline"><span style="display:inline-block;font-size:15.21px;transform:scaleX(0.585);transform-origin:0 100%;white-space:nowrap">します</span></span></span><div class="a" style="left:709.6px;top:700.8px;width:17px;height:17px;background:#f0f0f0;border-top:1px solid #fff;border-left:1px solid #fff;border-right:1px solid #767676;border-bottom:1px solid #767676;box-shadow:inset -1px -1px 0 #bdbdbd"></div><svg style="left:712.6px;top:704.2px" width="11" height="10" viewBox="0 0 11 10"><rect x="1" y="0" width="1.8" height="10" fill="#9a9a9a"/><path d="M9.5 0 V10 L3.5 5 Z" fill="#9a9a9a"/></svg><div class="a" style="left:729.4px;top:700.8px;width:17px;height:17px;background:#f0f0f0;border-top:1px solid #fff;border-left:1px solid #fff;border-right:1px solid #767676;border-bottom:1px solid #767676;box-shadow:inset -1px -1px 0 #bdbdbd"></div><svg style="left:732.4px;top:704.2px" width="11" height="10" viewBox="0 0 11 10"><path d="M3 0 V10 L9 5 Z" fill="#9a9a9a"/></svg><div class="a" style="left:749.0px;top:700.8px;width:17px;height:17px;background:#f0f0f0;border-top:1px solid #fff;border-left:1px solid #fff;border-right:1px solid #767676;border-bottom:1px solid #767676;box-shadow:inset -1px -1px 0 #bdbdbd"></div><svg style="left:752.0px;top:704.2px" width="11" height="10" viewBox="0 0 11 10"><rect x="8.2" y="0" width="1.8" height="10" fill="#9a9a9a"/><path d="M1.5 0 V10 L7.5 5 Z" fill="#9a9a9a"/></svg><div class="a" style="left:768.8px;top:701.2px;width:17px;height:17px;background:#fafafa;border-top:1px solid #9a9a9a;border-left:1px solid #9a9a9a;border-right:1px solid #fff;border-bottom:1px solid #fff"></div><span class="t" id="t47" style="left:771.68px;top:703.70px;transform:scaleX(0.7238);font-size:12.4px;color:#111;font-family:'Liberation Sans',sans-serif;">1</span><div class="a" style="left:789.6px;top:700.8px;width:17px;height:17px;background:#f0f0f0;border-top:1px solid #fff;border-left:1px solid #fff;border-right:1px solid #767676;border-bottom:1px solid #767676;box-shadow:inset -1px -1px 0 #bdbdbd"></div><svg style="left:792.6px;top:704.2px" width="11" height="10" viewBox="0 0 11 10"><rect x="7" y="0" width="1.8" height="10" fill="#9a9a9a"/><path d="M6 0 V10 L0 5 Z" fill="#9a9a9a"/></svg><div class="a" style="left:809.2px;top:700.8px;width:17px;height:17px;background:#f0f0f0;border-top:1px solid #fff;border-left:1px solid #fff;border-right:1px solid #767676;border-bottom:1px solid #767676;box-shadow:inset -1px -1px 0 #bdbdbd"></div><svg style="left:812.2px;top:704.2px" width="11" height="10" viewBox="0 0 11 10"><rect x="2" y="0" width="1.8" height="10" fill="#9a9a9a"/><path d="M5 0 V10 L11 5 Z" fill="#9a9a9a"/></svg><svg style="left:832px;top:706px" width="13" height="13" viewBox="0 0 13 13"><path d="M13 1 L1 13 M13 5 L5 13 M13 9 L9 13" stroke="#a0a0a0" stroke-width="1.2"/><path d="M13 2.2 L2.2 13 M13 6.2 L6.2 13 M13 10.2 L10.2 13" stroke="#fff" stroke-width=".8"/></svg>
<div class="a" style="left:0;top:0;width:847px;height:1px;background:#6e6e6e"></div>
<div class="a" style="left:0;top:0;width:1px;height:720px;background:#8a8a8a"></div>
</body>
</html>
